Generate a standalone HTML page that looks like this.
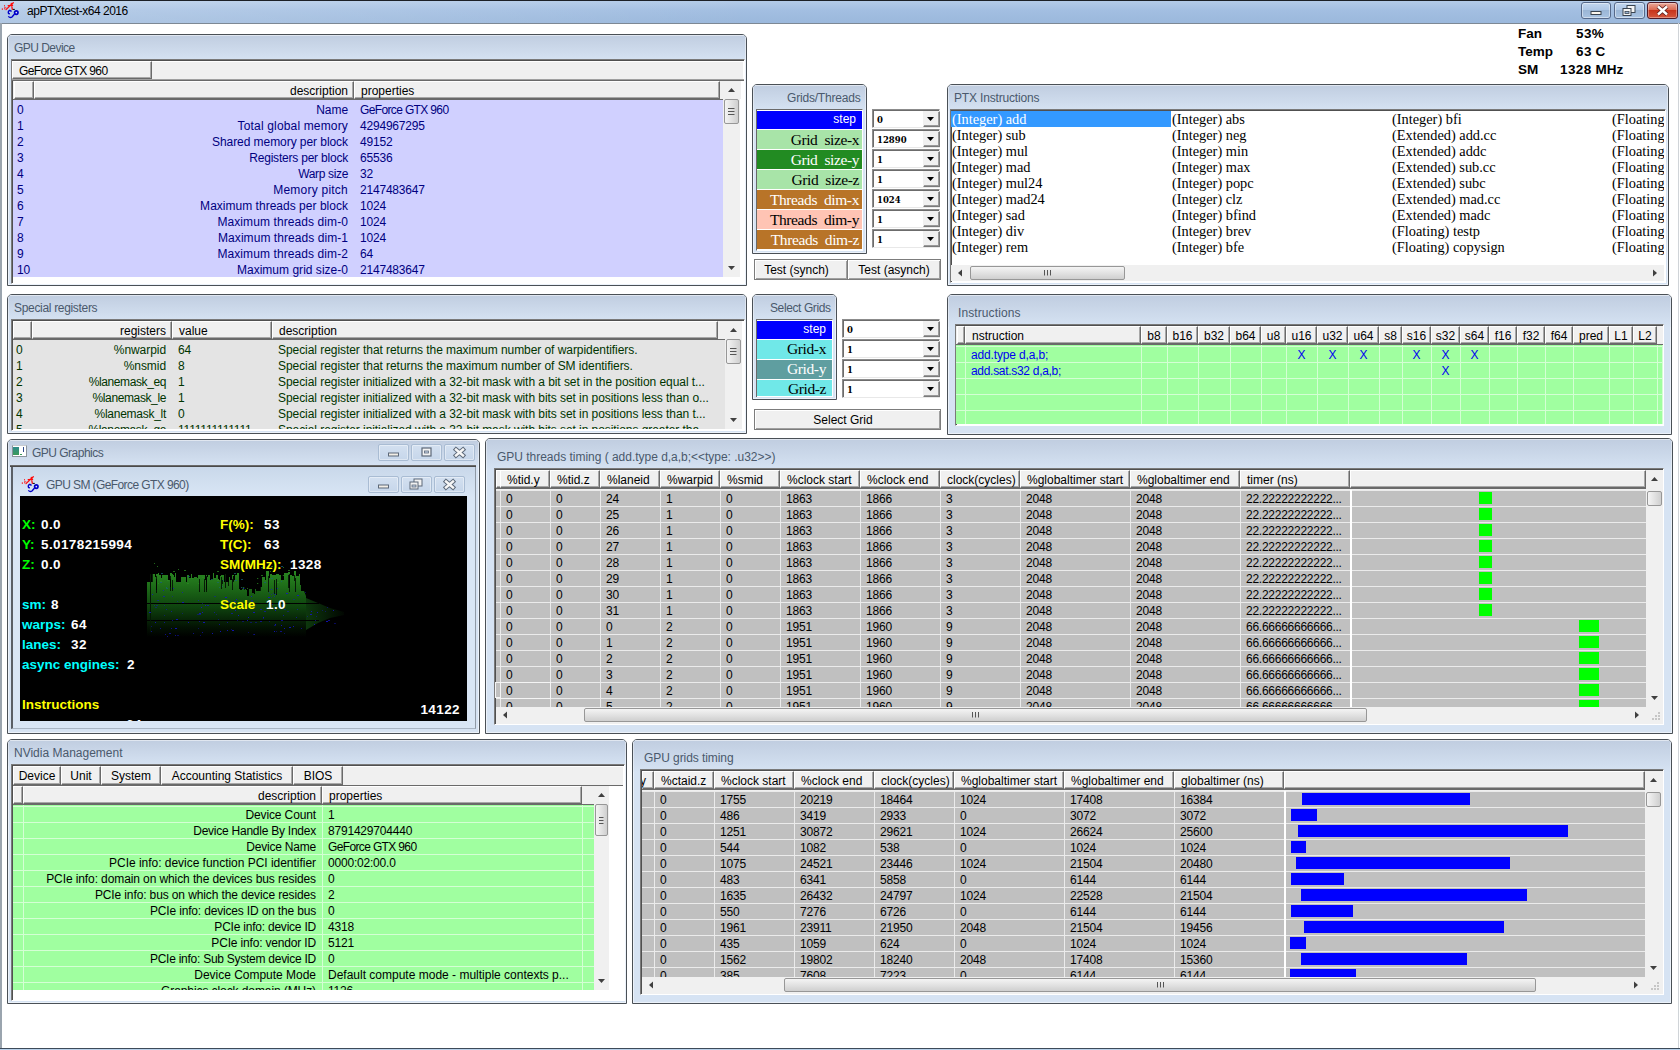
<!DOCTYPE html>
<html><head><meta charset="utf-8"><title>apPTXtest-x64 2016</title><style>
*{box-sizing:border-box}
html,body{margin:0;padding:0}
body{width:1680px;height:1050px;overflow:hidden;background:#fff;font-family:"Liberation Sans",sans-serif;font-size:12px;color:#000;position:relative}
div{position:absolute}
.t{white-space:nowrap;line-height:16px;height:16px}
.r{text-align:right}
.n{letter-spacing:-.2px}
.panel{border:1px solid #4a5056;border-radius:5px 5px 0 0;background:#d6e3f3;overflow:hidden;box-shadow:inset 0 0 0 1px rgba(255,255,255,.55)}
.hd{left:0;top:0;right:0;height:26px;background:linear-gradient(#c0cde0,#d6e3f3);box-shadow:inset 0 1px 0 rgba(255,255,255,.5),inset 1px 0 0 rgba(255,255,255,.4),inset -1px 0 0 rgba(255,255,255,.4)}
.ttl{color:#4a596c;white-space:nowrap;line-height:16px;letter-spacing:-.3px}
.sunk{border:1px solid;border-color:#7a7a7a #fff #fff #7a7a7a;box-shadow:inset 1px 1px 0 #505050}
.hc{background:#f0f0f0;border:1px solid;border-color:#fff #6a6a6a #6a6a6a #fff;box-shadow:inset -1px -1px 0 #a8a8a8;white-space:nowrap;line-height:15px;overflow:hidden;padding:2px 0 0 6px}
.hc.r{padding:2px 5px 0 0}
.hc.c{padding:2px 0 0 0;text-align:center}
.sb{background:#f0f0f0}
.th{border:1px solid #979797;border-radius:2px;background:linear-gradient(90deg,#f4f4f4,#e2e2e2 50%,#cfcfcf)}
.thh{border:1px solid #979797;border-radius:2px;background:linear-gradient(#f4f4f4,#e2e2e2 50%,#cfcfcf)}
.pb{background:#f0f0f0;border:1px solid #7c7c7c;box-shadow:inset 1px 1px 0 #fff,inset -1px -1px 0 #a0a0a0;text-align:center;line-height:20px;white-space:nowrap}
.btn{background:#f0f0f0;border:1px solid;border-color:#fff #6a6a6a #6a6a6a #fff;box-shadow:inset -1px -1px 0 #a8a8a8;text-align:center;line-height:17px;white-space:nowrap}
.cb{background:#fff;border:1px solid;border-color:#8c8c8c #e8e8e8 #e8e8e8 #8c8c8c;box-shadow:inset 1px 1px 0 #6c6c6c;font-family:"DejaVu Serif",serif;font-weight:bold;font-size:8.5px;line-height:21px;padding-left:4px;overflow:hidden}
.cbb{background:#f0f0f0;border:1px solid;border-color:#f0f0f0 #7a7a7a #7a7a7a #f0f0f0;box-shadow:inset -1px -1px 0 #9a9a9a}
.lab{font-family:"Liberation Serif",serif;font-size:15.5px;letter-spacing:-.4px;line-height:19px;text-align:right;white-space:pre;padding-right:3px;overflow:hidden}
.stp{font-family:"Liberation Sans",sans-serif;font-size:12px;letter-spacing:0;line-height:17px;padding-right:6px}
.sys{font-weight:bold;font-size:13.5px;white-space:nowrap;line-height:16px}
.sys i{font-style:normal;letter-spacing:.4px}
</style></head><body>
<div style="left:0px;top:0px;width:1680px;height:24px;background:linear-gradient(90deg,rgba(255,255,255,.22),rgba(255,255,255,0) 45%),linear-gradient(#b3cbe8,#a2bee1 45%,#9bb8dc);border-top:1px solid #1c2026;border-bottom:1px solid #7d8894"></div>
<div style="left:0px;top:23px;width:2px;height:1027px;background:#9aa4ae"></div>
<div style="left:1678px;top:23px;width:1px;height:1027px;background:#d0d4d8"></div>
<div style="left:0px;top:1048px;width:1680px;height:1px;background:#3d4a59"></div>
<div style="left:0px;top:1049px;width:1680px;height:1px;background:#b9d1ea"></div>
<svg style="position:absolute;left:0px;top:0px;" width="22" height="22" viewBox="0 0 22 22"><g fill="#ff1010"><rect x="1.8" y="8.4" width="1.1" height="1.4"/><rect x="4" y="5.2" width="1" height="1.1"/><rect x="4.3" y="6.8" width="1" height="1"/><rect x="5.3" y="7.4" width="1" height="1"/><rect x="4" y="8.3" width="1" height="1"/></g><path d="M6 9.6L13.3 2.7M11.3 3.4L12.3 9.3M8.2 5.7L12.6 5.4" stroke="#ff0808" stroke-width="1.25" fill="none" stroke-linecap="round"/><path d="M12.8 9.4H14.8" stroke="#000" stroke-width="1"/><path d="M11.6 11.4L9.7 10.3C8 11 8 12.6 8.7 13.7L9.9 13.8M8.3 16.4C9.5 17.7 11 17.8 12 17L14.6 14" stroke="#0000c8" stroke-width="1.4" fill="none"/><circle cx="16.3" cy="12.6" r="1.7" stroke="#0000c8" stroke-width="1.7" fill="#dde4f4"/></svg>
<div class="t" style="left:27px;top:3px;letter-spacing:-0.48px">apPTXtest-x64 2016</div>
<div style="left:1581px;top:2px;width:30px;height:17px;background:linear-gradient(#c3d7ef,#aec7e6 45%,#9bb6d6 50%,#a9c3e2);border:1px solid #56698a;border-radius:3px;box-shadow:inset 0 0 0 1px rgba(255,255,255,.45)"></div>
<svg style="position:absolute;left:1581px;top:2px;" width="30" height="17" viewBox="0 0 30 17"><rect x="10.0" y="9.5" width="10" height="3" fill="#fbf6ee" stroke="#3a4450" stroke-width="1"/></svg>
<div style="left:1614px;top:2px;width:31px;height:17px;background:linear-gradient(#c3d7ef,#aec7e6 45%,#9bb6d6 50%,#a9c3e2);border:1px solid #56698a;border-radius:3px;box-shadow:inset 0 0 0 1px rgba(255,255,255,.45)"></div>
<svg style="position:absolute;left:1614px;top:2px;" width="31" height="17" viewBox="0 0 31 17"><rect x="13.0" y="3.5" width="8" height="7" fill="#f4f4f4" stroke="#3a4450"/><rect x="9.0" y="6.5" width="8" height="7" fill="#f4f4f4" stroke="#3a4450"/><rect x="11.0" y="9.5" width="4" height="2" fill="#9bb6d6" stroke="#3a4450" stroke-width=".8"/></svg>
<div style="left:1647px;top:2px;width:31px;height:17px;background:linear-gradient(#e9a99b,#dc6a52 45%,#c8341c 50%,#d4573d);border:1px solid #4e1a28;border-radius:3px;box-shadow:inset 0 0 0 1px rgba(255,255,255,.35)"></div>
<svg style="position:absolute;left:1647px;top:2px;" width="31" height="17" viewBox="0 0 31 17"><path d="M11.0 4.5L20.0 12.5M20.0 4.5L11.0 12.5" stroke="#5a2020" stroke-width="4.2"/><path d="M11.0 4.5L20.0 12.5M20.0 4.5L11.0 12.5" stroke="#fff" stroke-width="2.4"/></svg>
<div class="t sys" style="left:1518px;top:26px">Fan</div>
<div class="t sys" style="left:1576px;top:26px;white-space:pre"><i>53</i>%</div>
<div class="t sys" style="left:1518px;top:44px">Temp</div>
<div class="t sys" style="left:1576px;top:44px;white-space:pre"><i>63</i> C</div>
<div class="t sys" style="left:1518px;top:62px">SM</div>
<div class="t sys" style="left:1560px;top:62px;white-space:pre"><i>1328</i> MHz</div>
<div class="panel" style="left:7px;top:34px;width:740px;height:252px;"><div class="hd" style="height:26px"></div><div class="ttl" style="left:6px;top:5px;letter-spacing:-0.53px;">GPU Device</div></div>
<div class="panel" style="left:752px;top:84px;width:115px;height:170px;"><div class="hd" style="height:26px"></div><div class="ttl" style="left:34px;top:5px;letter-spacing:-0.19px;">Grids/Threads</div></div>
<div class="panel" style="left:947px;top:84px;width:722px;height:202px;"><div class="hd" style="height:26px"></div><div class="ttl" style="left:6px;top:5px;letter-spacing:-0.17px;">PTX Instructions</div></div>
<div class="panel" style="left:7px;top:294px;width:740px;height:140px;"><div class="hd" style="height:26px"></div><div class="ttl" style="left:6px;top:5px;letter-spacing:-0.32px;">Special registers</div></div>
<div class="panel" style="left:752px;top:294px;width:85px;height:106px;"><div class="hd" style="height:26px"></div><div class="ttl" style="left:17px;top:5px;letter-spacing:-0.4px;">Select Grids</div></div>
<div class="panel" style="left:947px;top:294px;width:725px;height:141px;"><div class="hd" style="height:32px"></div><div class="ttl" style="left:10px;top:10px;letter-spacing:0.1px;">Instructions</div></div>
<div class="panel" style="left:7px;top:439px;width:473px;height:295px;"><div class="hd" style="height:27px"></div><div class="ttl" style="left:6px;top:5px;letter-spacing:-0.3px;"></div></div>
<div class="panel" style="left:485px;top:438px;width:1188px;height:296px;"><div class="hd" style="height:31px"></div><div class="ttl" style="left:11px;top:10px;letter-spacing:-0.02px;">GPU threads timing ( add.type d,a,b;&lt;&lt;type: .u32&gt;&gt;)</div></div>
<div class="panel" style="left:7px;top:739px;width:620px;height:265px;"><div class="hd" style="height:26px"></div><div class="ttl" style="left:6px;top:5px;letter-spacing:0.0px;">NVidia Management</div></div>
<div class="panel" style="left:632px;top:739px;width:1040px;height:265px;"><div class="hd" style="height:32px"></div><div class="ttl" style="left:11px;top:10px;letter-spacing:-0.07px;">GPU grids timing</div></div>
<div class="sunk" style="left:11px;top:59px;width:734px;height:225px;background:#fff"></div>
<div class="btn" style="left:12px;top:61px;width:140px;height:18px;text-align:left;padding-left:6px;line-height:19px;letter-spacing:-0.64px">GeForce GTX 960</div>
<div style="left:152px;top:61px;width:591px;height:18px;background:#f0f0f0;border-top:1px solid #fff"></div>
<div style="left:12px;top:79px;width:732px;height:2px;background:#6a6a6a;border-top:1px solid #a0a0a0"></div>
<div style="left:13px;top:81px;width:728px;height:18px;background:#f0f0f0"></div>
<div class="hc" style="left:14px;top:81px;width:20px;height:18px;"></div>
<div class="hc r" style="left:34px;top:81px;width:320px;height:18px;">description</div>
<div class="hc" style="left:354px;top:81px;width:366px;height:18px;">properties</div>
<div style="left:13px;top:99px;width:710px;height:1px;background:#6a6a6a"></div>
<div style="left:13px;top:100px;width:710px;height:177px;background:#d0d0ff"></div>
<div class="t n" style="left:17px;top:102px;color:#000080">0</div>
<div class="t r" style="left:48px;top:102px;color:#000080;width:300px;letter-spacing:-0.07px">Name</div>
<div class="t" style="left:360px;top:102px;color:#000080;letter-spacing:-0.64px">GeForce GTX 960</div>
<div class="t n" style="left:17px;top:118px;color:#000080">1</div>
<div class="t r" style="left:48px;top:118px;color:#000080;width:300px;letter-spacing:0.16px">Total global memory</div>
<div class="t n" style="left:360px;top:118px;color:#000080">4294967295</div>
<div class="t n" style="left:17px;top:134px;color:#000080">2</div>
<div class="t r" style="left:48px;top:134px;color:#000080;width:300px;letter-spacing:-0.06px">Shared memory per block</div>
<div class="t n" style="left:360px;top:134px;color:#000080">49152</div>
<div class="t n" style="left:17px;top:150px;color:#000080">3</div>
<div class="t r" style="left:48px;top:150px;color:#000080;width:300px;letter-spacing:-0.21px">Registers per block</div>
<div class="t n" style="left:360px;top:150px;color:#000080">65536</div>
<div class="t n" style="left:17px;top:166px;color:#000080">4</div>
<div class="t r" style="left:48px;top:166px;color:#000080;width:300px;letter-spacing:-0.35px">Warp size</div>
<div class="t n" style="left:360px;top:166px;color:#000080">32</div>
<div class="t n" style="left:17px;top:182px;color:#000080">5</div>
<div class="t r" style="left:48px;top:182px;color:#000080;width:300px;letter-spacing:0.23px">Memory pitch</div>
<div class="t n" style="left:360px;top:182px;color:#000080">2147483647</div>
<div class="t n" style="left:17px;top:198px;color:#000080">6</div>
<div class="t r" style="left:48px;top:198px;color:#000080;width:300px;letter-spacing:0.02px">Maximum threads per block</div>
<div class="t n" style="left:360px;top:198px;color:#000080">1024</div>
<div class="t n" style="left:17px;top:214px;color:#000080">7</div>
<div class="t r" style="left:48px;top:214px;color:#000080;width:300px;letter-spacing:0.09px">Maximum threads dim-0</div>
<div class="t n" style="left:360px;top:214px;color:#000080">1024</div>
<div class="t n" style="left:17px;top:230px;color:#000080">8</div>
<div class="t r" style="left:48px;top:230px;color:#000080;width:300px;letter-spacing:0.06px">Maximum threads dim-1</div>
<div class="t n" style="left:360px;top:230px;color:#000080">1024</div>
<div class="t n" style="left:17px;top:246px;color:#000080">9</div>
<div class="t r" style="left:48px;top:246px;color:#000080;width:300px;letter-spacing:0.09px">Maximum threads dim-2</div>
<div class="t n" style="left:360px;top:246px;color:#000080">64</div>
<div class="t n" style="left:17px;top:262px;color:#000080">10</div>
<div class="t r" style="left:48px;top:262px;color:#000080;width:300px;letter-spacing:0.02px">Maximum grid size-0</div>
<div class="t n" style="left:360px;top:262px;color:#000080">2147483647</div>
<div class="sb" style="left:723px;top:81px;width:17px;height:196px;"></div>
<svg style="position:absolute;left:723px;top:81px;" width="17" height="196" viewBox="0 0 17 196"><polygon points="5.0,11 12.0,11 8.5,7" fill="#404040"/><polygon points="5.0,185 12.0,185 8.5,189" fill="#404040"/></svg>
<div class="th" style="left:724px;top:99px;width:15px;height:25px;"></div>
<div style="left:728px;top:108px;width:7px;height:1px;background:#555;border-right:1px solid #999"></div>
<div style="left:728px;top:111px;width:7px;height:1px;background:#555;border-right:1px solid #999"></div>
<div style="left:728px;top:114px;width:7px;height:1px;background:#555;border-right:1px solid #999"></div>
<div style="left:756px;top:109px;width:107px;height:142px;background:#fff;border:1px solid #6a6a6a;border-right-color:#fff;border-bottom-color:#fff"></div>
<div class="lab stp" style="left:757px;top:111px;width:105px;height:18px;background:#0000ff;color:#fff;">step</div>
<div class="cb" style="left:872px;top:109px;width:68px;height:19px;">0</div>
<div class="cbb" style="left:923px;top:111px;width:17px;height:16px;"></div>
<svg style="position:absolute;left:923px;top:111px;" width="16" height="16" viewBox="0 0 16 16"><polygon points="4.0,6 11.0,6 7.5,10" fill="#000"/></svg>
<div class="lab" style="left:757px;top:130px;width:105px;height:19px;background:#a8e4a8;color:#000;">Grid  size-x</div>
<div class="cb" style="left:872px;top:129px;width:68px;height:19px;">12890</div>
<div class="cbb" style="left:923px;top:131px;width:17px;height:16px;"></div>
<svg style="position:absolute;left:923px;top:131px;" width="16" height="16" viewBox="0 0 16 16"><polygon points="4.0,6 11.0,6 7.5,10" fill="#000"/></svg>
<div class="lab" style="left:757px;top:150px;width:105px;height:19px;background:#228b22;color:#fff;">Grid  size-y</div>
<div class="cb" style="left:872px;top:149px;width:68px;height:19px;">1</div>
<div class="cbb" style="left:923px;top:151px;width:17px;height:16px;"></div>
<svg style="position:absolute;left:923px;top:151px;" width="16" height="16" viewBox="0 0 16 16"><polygon points="4.0,6 11.0,6 7.5,10" fill="#000"/></svg>
<div class="lab" style="left:757px;top:170px;width:105px;height:19px;background:#a8e4a8;color:#000;">Grid  size-z</div>
<div class="cb" style="left:872px;top:169px;width:68px;height:19px;">1</div>
<div class="cbb" style="left:923px;top:171px;width:17px;height:16px;"></div>
<svg style="position:absolute;left:923px;top:171px;" width="16" height="16" viewBox="0 0 16 16"><polygon points="4.0,6 11.0,6 7.5,10" fill="#000"/></svg>
<div class="lab" style="left:757px;top:190px;width:105px;height:19px;background:#b87428;color:#fff;">Threads  dim-x</div>
<div class="cb" style="left:872px;top:189px;width:68px;height:19px;">1024</div>
<div class="cbb" style="left:923px;top:191px;width:17px;height:16px;"></div>
<svg style="position:absolute;left:923px;top:191px;" width="16" height="16" viewBox="0 0 16 16"><polygon points="4.0,6 11.0,6 7.5,10" fill="#000"/></svg>
<div class="lab" style="left:757px;top:210px;width:105px;height:19px;background:#ffc4b4;color:#000;">Threads  dim-y</div>
<div class="cb" style="left:872px;top:209px;width:68px;height:19px;">1</div>
<div class="cbb" style="left:923px;top:211px;width:17px;height:16px;"></div>
<svg style="position:absolute;left:923px;top:211px;" width="16" height="16" viewBox="0 0 16 16"><polygon points="4.0,6 11.0,6 7.5,10" fill="#000"/></svg>
<div class="lab" style="left:757px;top:230px;width:105px;height:19px;background:#b87428;color:#fff;">Threads  dim-z</div>
<div class="cb" style="left:872px;top:229px;width:68px;height:19px;">1</div>
<div class="cbb" style="left:923px;top:231px;width:17px;height:16px;"></div>
<svg style="position:absolute;left:923px;top:231px;" width="16" height="16" viewBox="0 0 16 16"><polygon points="4.0,6 11.0,6 7.5,10" fill="#000"/></svg>
<div class="pb" style="left:754px;top:259px;width:94px;height:21px;padding-right:9px">Test (synch)</div>
<div class="pb" style="left:847px;top:259px;width:94px;height:21px;">Test (asynch)</div>
<div class="sunk" style="left:950px;top:109px;width:716px;height:174px;background:#fff"></div>
<div style="left:951px;top:111px;width:220px;height:16px;background:#3399ff"></div>
<div style="left:951px;top:111px;width:713px;height:154px;overflow:hidden;font-family:'Liberation Serif',serif;font-size:14.35px">
<div class="t" style="left:1px;top:0px;color:#fff">(Integer) add</div>
<div class="t" style="left:1px;top:16px;color:#000">(Integer) sub</div>
<div class="t" style="left:1px;top:32px;color:#000">(Integer) mul</div>
<div class="t" style="left:1px;top:48px;color:#000">(Integer) mad</div>
<div class="t" style="left:1px;top:64px;color:#000">(Integer) mul24</div>
<div class="t" style="left:1px;top:80px;color:#000">(Integer) mad24</div>
<div class="t" style="left:1px;top:96px;color:#000">(Integer) sad</div>
<div class="t" style="left:1px;top:112px;color:#000">(Integer) div</div>
<div class="t" style="left:1px;top:128px;color:#000">(Integer) rem</div>
<div class="t" style="left:221px;top:0px;color:#000">(Integer) abs</div>
<div class="t" style="left:221px;top:16px;color:#000">(Integer) neg</div>
<div class="t" style="left:221px;top:32px;color:#000">(Integer) min</div>
<div class="t" style="left:221px;top:48px;color:#000">(Integer) max</div>
<div class="t" style="left:221px;top:64px;color:#000">(Integer) popc</div>
<div class="t" style="left:221px;top:80px;color:#000">(Integer) clz</div>
<div class="t" style="left:221px;top:96px;color:#000">(Integer) bfind</div>
<div class="t" style="left:221px;top:112px;color:#000">(Integer) brev</div>
<div class="t" style="left:221px;top:128px;color:#000">(Integer) bfe</div>
<div class="t" style="left:441px;top:0px;color:#000">(Integer) bfi</div>
<div class="t" style="left:441px;top:16px;color:#000">(Extended) add.cc</div>
<div class="t" style="left:441px;top:32px;color:#000">(Extended) addc</div>
<div class="t" style="left:441px;top:48px;color:#000">(Extended) sub.cc</div>
<div class="t" style="left:441px;top:64px;color:#000">(Extended) subc</div>
<div class="t" style="left:441px;top:80px;color:#000">(Extended) mad.cc</div>
<div class="t" style="left:441px;top:96px;color:#000">(Extended) madc</div>
<div class="t" style="left:441px;top:112px;color:#000">(Floating) testp</div>
<div class="t" style="left:441px;top:128px;color:#000">(Floating) copysign</div>
<div class="t" style="left:661px;top:0px;color:#000">(Floating)</div>
<div class="t" style="left:661px;top:16px;color:#000">(Floating)</div>
<div class="t" style="left:661px;top:32px;color:#000">(Floating)</div>
<div class="t" style="left:661px;top:48px;color:#000">(Floating)</div>
<div class="t" style="left:661px;top:64px;color:#000">(Floating)</div>
<div class="t" style="left:661px;top:80px;color:#000">(Floating)</div>
<div class="t" style="left:661px;top:96px;color:#000">(Floating)</div>
<div class="t" style="left:661px;top:112px;color:#000">(Floating)</div>
<div class="t" style="left:661px;top:128px;color:#000">(Floating)</div>
</div>
<div class="sb" style="left:951px;top:265px;width:713px;height:16px;"></div>
<svg style="position:absolute;left:951px;top:265px;" width="713" height="16" viewBox="0 0 713 16"><polygon points="11,4.5 11,11.5 7,8.0" fill="#404040"/><polygon points="702,4.5 702,11.5 706,8.0" fill="#404040"/></svg>
<div class="thh" style="left:970px;top:266px;width:155px;height:14px;"></div>
<div style="left:1044px;top:270px;width:1px;height:6px;background:#555;border-bottom:1px solid #999"></div>
<div style="left:1047px;top:270px;width:1px;height:6px;background:#555;border-bottom:1px solid #999"></div>
<div style="left:1050px;top:270px;width:1px;height:6px;background:#555;border-bottom:1px solid #999"></div>
<div class="sunk" style="left:11px;top:319px;width:734px;height:112px;background:#fff"></div>
<div style="left:13px;top:321px;width:729px;height:18px;background:#f0f0f0"></div>
<div class="hc" style="left:13px;top:321px;width:19px;height:18px;"></div>
<div class="hc r" style="left:32px;top:321px;width:140px;height:18px;">registers</div>
<div class="hc" style="left:172px;top:321px;width:100px;height:18px;">value</div>
<div class="hc" style="left:272px;top:321px;width:446px;height:18px;">description</div>
<div style="left:13px;top:339px;width:712px;height:1px;background:#6a6a6a"></div>
<div style="left:13px;top:340px;width:712px;height:89px;overflow:hidden;background:#e4e4e4;color:#003400">
<div class="t" style="left:3px;top:2px">0</div><div class="t r" style="left:0;width:153px;top:2px;letter-spacing:-0.06px">%nwarpid</div><div class="t n" style="left:165px;top:2px">64</div><div class="t" style="left:265px;top:2px;letter-spacing:-.06px">Special register that returns the maximum number of warpidentifiers.</div>
<div class="t" style="left:3px;top:18px">1</div><div class="t r" style="left:0;width:153px;top:18px;letter-spacing:-0.07px">%nsmid</div><div class="t n" style="left:165px;top:18px">8</div><div class="t" style="left:265px;top:18px;letter-spacing:-.06px">Special register that returns the maximum number of SM identifiers.</div>
<div class="t" style="left:3px;top:34px">2</div><div class="t r" style="left:0;width:153px;top:34px;letter-spacing:-0.4px">%lanemask_eq</div><div class="t n" style="left:165px;top:34px">1</div><div class="t" style="left:265px;top:34px;letter-spacing:-.06px">Special register initialized with a 32-bit mask with a bit set in the position equal t...</div>
<div class="t" style="left:3px;top:50px">3</div><div class="t r" style="left:0;width:153px;top:50px;letter-spacing:-0.38px">%lanemask_le</div><div class="t n" style="left:165px;top:50px">1</div><div class="t" style="left:265px;top:50px;letter-spacing:-.06px">Special register initialized with a 32-bit mask with bits set in positions less than o...</div>
<div class="t" style="left:3px;top:66px">4</div><div class="t r" style="left:0;width:153px;top:66px;letter-spacing:-0.27px">%lanemask_lt</div><div class="t n" style="left:165px;top:66px">0</div><div class="t" style="left:265px;top:66px;letter-spacing:-.06px">Special register initialized with a 32-bit mask with bits set in positions less than t...</div>
<div class="t" style="left:3px;top:82px">5</div><div class="t r" style="left:0;width:153px;top:82px;letter-spacing:-0.38px">%lanemask_ge</div><div class="t n" style="left:165px;top:82px">1111111111111...</div><div class="t" style="left:265px;top:82px;letter-spacing:-.06px">Special register initialized with a 32-bit mask with bits set in positions greater tha...</div>
</div>
<div class="sb" style="left:725px;top:321px;width:17px;height:108px;"></div>
<svg style="position:absolute;left:725px;top:321px;" width="17" height="108" viewBox="0 0 17 108"><polygon points="5.0,11 12.0,11 8.5,7" fill="#404040"/><polygon points="5.0,97 12.0,97 8.5,101" fill="#404040"/></svg>
<div class="th" style="left:726px;top:339px;width:15px;height:25px;"></div>
<div style="left:730px;top:348px;width:7px;height:1px;background:#555;border-right:1px solid #999"></div>
<div style="left:730px;top:351px;width:7px;height:1px;background:#555;border-right:1px solid #999"></div>
<div style="left:730px;top:354px;width:7px;height:1px;background:#555;border-right:1px solid #999"></div>
<div style="left:756px;top:319px;width:77px;height:78px;background:#fff;border:1px solid #6a6a6a;border-right-color:#fff;border-bottom:0"></div>
<div class="lab stp" style="left:757px;top:321px;width:75px;height:18px;background:#0000ff;color:#fff;">step</div>
<div class="cb" style="left:842px;top:319px;width:98px;height:19px;">0</div>
<div class="cbb" style="left:923px;top:321px;width:17px;height:16px;"></div>
<svg style="position:absolute;left:923px;top:321px;" width="16" height="16" viewBox="0 0 16 16"><polygon points="4.0,6 11.0,6 7.5,10" fill="#000"/></svg>
<div class="lab" style="left:757px;top:340px;width:75px;height:19px;background:#70e8e8;color:#000;padding-right:6px;line-height:17.5px;">Grid-x</div>
<div class="cb" style="left:842px;top:339px;width:98px;height:19px;">1</div>
<div class="cbb" style="left:923px;top:341px;width:17px;height:16px;"></div>
<svg style="position:absolute;left:923px;top:341px;" width="16" height="16" viewBox="0 0 16 16"><polygon points="4.0,6 11.0,6 7.5,10" fill="#000"/></svg>
<div class="lab" style="left:757px;top:360px;width:75px;height:19px;background:#5f9ea0;color:#fff;padding-right:6px;line-height:17.5px;">Grid-y</div>
<div class="cb" style="left:842px;top:359px;width:98px;height:19px;">1</div>
<div class="cbb" style="left:923px;top:361px;width:17px;height:16px;"></div>
<svg style="position:absolute;left:923px;top:361px;" width="16" height="16" viewBox="0 0 16 16"><polygon points="4.0,6 11.0,6 7.5,10" fill="#000"/></svg>
<div class="lab" style="left:757px;top:380px;width:75px;height:16px;background:#70e8e8;color:#000;padding-right:6px;line-height:17.5px;">Grid-z</div>
<div class="cb" style="left:842px;top:379px;width:98px;height:19px;">1</div>
<div class="cbb" style="left:923px;top:381px;width:17px;height:16px;"></div>
<svg style="position:absolute;left:923px;top:381px;" width="16" height="16" viewBox="0 0 16 16"><polygon points="4.0,6 11.0,6 7.5,10" fill="#000"/></svg>
<div class="pb" style="left:754px;top:409px;width:187px;height:21px;padding-right:9px">Select Grid</div>
<div class="sunk" style="left:955px;top:324px;width:709px;height:102px;background:#fff"></div>
<div style="left:956px;top:326px;width:707px;height:18px;background:#f0f0f0"></div>
<div class="hc" style="left:957px;top:326px;width:8px;height:18px;"></div>
<div class="hc" style="left:965px;top:326px;width:176px;height:18px;">nstruction</div>
<div class="hc c" style="left:1141px;top:326px;width:26px;height:18px;">b8</div>
<div class="hc c" style="left:1167px;top:326px;width:31px;height:18px;">b16</div>
<div class="hc c" style="left:1198px;top:326px;width:32px;height:18px;">b32</div>
<div class="hc c" style="left:1230px;top:326px;width:31px;height:18px;">b64</div>
<div class="hc c" style="left:1261px;top:326px;width:25px;height:18px;">u8</div>
<div class="hc c" style="left:1286px;top:326px;width:31px;height:18px;">u16</div>
<div class="hc c" style="left:1317px;top:326px;width:31px;height:18px;">u32</div>
<div class="hc c" style="left:1348px;top:326px;width:31px;height:18px;">u64</div>
<div class="hc c" style="left:1379px;top:326px;width:23px;height:18px;">s8</div>
<div class="hc c" style="left:1402px;top:326px;width:29px;height:18px;">s16</div>
<div class="hc c" style="left:1431px;top:326px;width:29px;height:18px;">s32</div>
<div class="hc c" style="left:1460px;top:326px;width:29px;height:18px;">s64</div>
<div class="hc c" style="left:1489px;top:326px;width:28px;height:18px;">f16</div>
<div class="hc c" style="left:1517px;top:326px;width:28px;height:18px;">f32</div>
<div class="hc c" style="left:1545px;top:326px;width:28px;height:18px;">f64</div>
<div class="hc c" style="left:1573px;top:326px;width:36px;height:18px;">pred</div>
<div class="hc c" style="left:1609px;top:326px;width:24px;height:18px;">L1</div>
<div class="hc c" style="left:1633px;top:326px;width:24px;height:18px;">L2</div>
<div style="left:956px;top:344px;width:707px;height:1px;background:#6a6a6a"></div>
<div style="left:956px;top:345px;width:707px;height:79px;background:#a0ffa0"></div>
<div style="left:956px;top:346px;width:707px;height:1px;background:#d4ffd4"></div>
<div style="left:956px;top:362px;width:707px;height:1px;background:#d4ffd4"></div>
<div style="left:956px;top:378px;width:707px;height:1px;background:#d4ffd4"></div>
<div style="left:956px;top:394px;width:707px;height:1px;background:#d4ffd4"></div>
<div style="left:956px;top:410px;width:707px;height:1px;background:#d4ffd4"></div>
<div style="left:965px;top:345px;width:1px;height:79px;background:#d4ffd4"></div>
<div style="left:1141px;top:345px;width:1px;height:79px;background:#d4ffd4"></div>
<div style="left:1167px;top:345px;width:1px;height:79px;background:#d4ffd4"></div>
<div style="left:1198px;top:345px;width:1px;height:79px;background:#d4ffd4"></div>
<div style="left:1230px;top:345px;width:1px;height:79px;background:#d4ffd4"></div>
<div style="left:1261px;top:345px;width:1px;height:79px;background:#d4ffd4"></div>
<div style="left:1286px;top:345px;width:1px;height:79px;background:#d4ffd4"></div>
<div style="left:1317px;top:345px;width:1px;height:79px;background:#d4ffd4"></div>
<div style="left:1348px;top:345px;width:1px;height:79px;background:#d4ffd4"></div>
<div style="left:1379px;top:345px;width:1px;height:79px;background:#d4ffd4"></div>
<div style="left:1402px;top:345px;width:1px;height:79px;background:#d4ffd4"></div>
<div style="left:1431px;top:345px;width:1px;height:79px;background:#d4ffd4"></div>
<div style="left:1460px;top:345px;width:1px;height:79px;background:#d4ffd4"></div>
<div style="left:1489px;top:345px;width:1px;height:79px;background:#d4ffd4"></div>
<div style="left:1517px;top:345px;width:1px;height:79px;background:#d4ffd4"></div>
<div style="left:1545px;top:345px;width:1px;height:79px;background:#d4ffd4"></div>
<div style="left:1573px;top:345px;width:1px;height:79px;background:#d4ffd4"></div>
<div style="left:1609px;top:345px;width:1px;height:79px;background:#d4ffd4"></div>
<div style="left:1633px;top:345px;width:1px;height:79px;background:#d4ffd4"></div>
<div style="left:1657px;top:345px;width:1px;height:79px;background:#d4ffd4"></div>
<div style="left:1662px;top:345px;width:1px;height:79px;background:#d4ffd4"></div>
<div class="t" style="left:971px;top:347px;color:#0000f0;letter-spacing:-.15px">add.type d,a,b;</div>
<div class="t" style="left:971px;top:363px;color:#0000f0;letter-spacing:-.3px">add.sat.s32 d,a,b;</div>
<div class="t" style="left:1286px;top:347px;color:#0000f0;width:31px;text-align:center">X</div>
<div class="t" style="left:1317px;top:347px;color:#0000f0;width:31px;text-align:center">X</div>
<div class="t" style="left:1348px;top:347px;color:#0000f0;width:31px;text-align:center">X</div>
<div class="t" style="left:1402px;top:347px;color:#0000f0;width:29px;text-align:center">X</div>
<div class="t" style="left:1431px;top:347px;color:#0000f0;width:29px;text-align:center">X</div>
<div class="t" style="left:1460px;top:347px;color:#0000f0;width:29px;text-align:center">X</div>
<div class="t" style="left:1431px;top:363px;color:#0000f0;width:29px;text-align:center">X</div>
<div style="left:12px;top:445px;width:15px;height:12px;background:#fff;border:1px solid #8a939c;border-top-color:#c8ccd0"></div>
<div style="left:13px;top:447px;width:6px;height:8px;background:linear-gradient(#2e8b8b,#3a9a5a)"></div>
<div style="left:20px;top:454px;width:2px;height:1px;background:#3a9a5a"></div>
<div style="left:23px;top:447px;width:1px;height:5px;background:#2e4a8b"></div>
<div class="t ttl" style="left:32px;top:445px;letter-spacing:-0.51px">GPU Graphics</div>
<div style="left:378px;top:444px;width:31px;height:17px;background:linear-gradient(#d3e0f0,#c6d6ea);border:1px solid #a9bcd3;border-radius:2px;box-shadow:inset 0 0 0 1px rgba(255,255,255,.4)"></div>
<svg style="position:absolute;left:378px;top:444px;" width="31" height="17" viewBox="0 0 31 17"><rect x="10.5" y="9.0" width="10" height="3" fill="#f2eee6" stroke="#5c6878"/></svg>
<div style="left:411px;top:444px;width:31px;height:17px;background:linear-gradient(#d3e0f0,#c6d6ea);border:1px solid #a9bcd3;border-radius:2px;box-shadow:inset 0 0 0 1px rgba(255,255,255,.4)"></div>
<svg style="position:absolute;left:411px;top:444px;" width="31" height="17" viewBox="0 0 31 17"><rect x="11.0" y="4.0" width="9" height="8" fill="#f2f2f2" stroke="#5c6878" stroke-width="1.2"/><rect x="13.5" y="7.0" width="4" height="2" fill="#c6d6ea" stroke="#5c6878" stroke-width=".8"/></svg>
<div style="left:444px;top:444px;width:31px;height:17px;background:linear-gradient(#d3e0f0,#c6d6ea);border:1px solid #a9bcd3;border-radius:2px;box-shadow:inset 0 0 0 1px rgba(255,255,255,.4)"></div>
<svg style="position:absolute;left:444px;top:444px;" width="31" height="17" viewBox="0 0 31 17"><path d="M12.0 5.5L19.0 11.5M19.0 5.5L12.0 11.5" stroke="#5c6878" stroke-width="4.4" stroke-linecap="square"/><path d="M12.0 5.5L19.0 11.5M19.0 5.5L12.0 11.5" stroke="#f6f6f6" stroke-width="2.4" stroke-linecap="square"/></svg>
<div style="left:10px;top:465px;width:466px;height:2px;background:#6a6a6a;border-bottom:1px solid #4a4a4a"></div>
<div style="left:11px;top:467px;width:465px;height:262px;background:linear-gradient(#c9d8ea,#d9e6f5 30px,#d9e6f5);border-left:2px solid #5a5f66;border-right:1px solid #8f99a5;border-bottom:1px solid #aab6c4"></div>
<svg style="position:absolute;left:20px;top:474px;" width="22" height="22" viewBox="0 0 22 22"><g fill="#ff1010"><rect x="1.8" y="8.4" width="1.1" height="1.4"/><rect x="4" y="5.2" width="1" height="1.1"/><rect x="4.3" y="6.8" width="1" height="1"/><rect x="5.3" y="7.4" width="1" height="1"/><rect x="4" y="8.3" width="1" height="1"/></g><path d="M6 9.6L13.3 2.7M11.3 3.4L12.3 9.3M8.2 5.7L12.6 5.4" stroke="#ff0808" stroke-width="1.25" fill="none" stroke-linecap="round"/><path d="M12.8 9.4H14.8" stroke="#000" stroke-width="1"/><path d="M11.6 11.4L9.7 10.3C8 11 8 12.6 8.7 13.7L9.9 13.8M8.3 16.4C9.5 17.7 11 17.8 12 17L14.6 14" stroke="#0000c8" stroke-width="1.4" fill="none"/><circle cx="16.3" cy="12.6" r="1.7" stroke="#0000c8" stroke-width="1.7" fill="#dde4f4"/></svg>
<div class="t ttl" style="left:46px;top:477px;letter-spacing:-0.59px">GPU SM (GeForce GTX 960)</div>
<div style="left:368px;top:476px;width:31px;height:17px;background:linear-gradient(#d3e0f0,#c6d6ea);border:1px solid #a9bcd3;border-radius:2px;box-shadow:inset 0 0 0 1px rgba(255,255,255,.4)"></div>
<svg style="position:absolute;left:368px;top:476px;" width="31" height="17" viewBox="0 0 31 17"><rect x="10.5" y="9.0" width="10" height="3" fill="#f2eee6" stroke="#5c6878"/></svg>
<div style="left:401px;top:476px;width:31px;height:17px;background:linear-gradient(#d3e0f0,#c6d6ea);border:1px solid #a9bcd3;border-radius:2px;box-shadow:inset 0 0 0 1px rgba(255,255,255,.4)"></div>
<svg style="position:absolute;left:401px;top:476px;" width="31" height="17" viewBox="0 0 31 17"><rect x="13.0" y="3.0" width="8" height="7" fill="#f2f2f2" stroke="#5c6878"/><rect x="9.0" y="6.0" width="8" height="7" fill="#f2f2f2" stroke="#5c6878"/><rect x="11.0" y="9.0" width="4" height="2" fill="#c6d6ea" stroke="#5c6878" stroke-width=".8"/></svg>
<div style="left:434px;top:476px;width:31px;height:17px;background:linear-gradient(#d3e0f0,#c6d6ea);border:1px solid #a9bcd3;border-radius:2px;box-shadow:inset 0 0 0 1px rgba(255,255,255,.4)"></div>
<svg style="position:absolute;left:434px;top:476px;" width="31" height="17" viewBox="0 0 31 17"><path d="M12.0 5.5L19.0 11.5M19.0 5.5L12.0 11.5" stroke="#5c6878" stroke-width="4.4" stroke-linecap="square"/><path d="M12.0 5.5L19.0 11.5M19.0 5.5L12.0 11.5" stroke="#f6f6f6" stroke-width="2.4" stroke-linecap="square"/></svg>
<div style="left:20px;top:496px;width:447px;height:225px;background:#000;overflow:hidden"></div>
<svg style="position:absolute;left:20px;top:496px" width="447" height="225" viewBox="0 0 447 225"><defs><linearGradient id="hg" x1="0" y1="0" x2="0" y2="1"><stop offset="0" stop-color="#2a8822"/><stop offset=".25" stop-color="#1d6a18"/><stop offset=".55" stop-color="#0e420e"/><stop offset=".85" stop-color="#031203"/><stop offset="1" stop-color="#000"/></linearGradient><linearGradient id="tg" x1="0" y1="0" x2="1" y2="0"><stop offset="0" stop-color="#135013"/><stop offset="1" stop-color="#020a02"/></linearGradient></defs><polygon points="286,102 298,107 310,112 324,116 324,119 310,122 298,127 286,134" fill="url(#tg)" opacity=".7"/><polygon points="127,141 127,86 130,86 130,86 132,86 132,78 135,78 135,81 136,81 136,78 138,78 138,77 139,77 139,79 141,79 141,82 142,82 142,79 145,79 145,79 148,79 148,84 150,84 150,77 151,77 151,77 152,77 152,78 153,78 153,79 154,79 154,81 155,81 155,77 156,77 156,86 158,86 158,86 161,86 161,81 164,81 164,81 166,81 166,86 167,86 167,79 169,79 169,82 171,82 171,78 172,78 172,82 174,82 174,81 177,81 177,82 178,82 178,79 181,79 181,79 183,79 183,79 185,79 185,84 186,84 186,79 187,79 187,81 188,81 188,79 190,79 190,84 192,84 192,84 193,84 193,77 194,77 194,82 196,82 196,79 198,79 198,83 199,83 199,84 200,84 200,80 201,80 201,79 202,79 202,79 204,79 204,86 205,86 205,78 206,78 206,86 209,86 209,81 210,81 210,84 212,84 212,79 214,79 214,84 215,84 215,79 217,79 217,77 219,77 219,93 220,93 220,94 222,94 222,91 225,91 225,93 226,93 226,94 227,94 227,100 229,100 229,93 232,93 232,97 234,97 234,98 235,98 235,93 236,93 236,95 239,95 239,95 240,95 240,91 242,91 242,81 245,81 245,84 246,84 246,75 248,75 248,75 249,75 249,82 250,82 250,78 252,78 252,79 255,79 255,79 256,79 256,78 259,78 259,79 261,79 261,84 264,84 264,77 266,77 266,77 267,77 267,77 268,77 268,76 270,76 270,79 272,79 272,80 274,80 274,75 276,75 276,80 279,80 279,78 280,78 280,89 281,89 281,95 284,95 286,100 286,141" fill="url(#hg)"/><rect x="222" y="78" width="10" height="9" fill="#000" opacity=".8"/><rect x="127" y="107" width="172" height="1" fill="#000"/><rect x="127" y="124" width="172" height="1" fill="#000"/><rect x="130" y="78" width="1" height="58" fill="#041804"/><rect x="285" y="96" width="1" height="1" fill="#1414c8" opacity="0.45"/><rect x="180" y="139" width="1" height="1" fill="#1414c8" opacity="0.45"/><rect x="196" y="118" width="1" height="1" fill="#1414c8" opacity="0.45"/><rect x="143" y="94" width="1" height="1" fill="#1414c8" opacity="0.65"/><rect x="222" y="125" width="2" height="1" fill="#1414c8" opacity="0.45"/><rect x="151" y="115" width="1" height="1" fill="#1414c8" opacity="0.65"/><rect x="212" y="134" width="2" height="1" fill="#1414c8" opacity="0.85"/><rect x="261" y="129" width="1" height="1" fill="#1414c8" opacity="0.85"/><rect x="136" y="93" width="1" height="1" fill="#1414c8" opacity="0.65"/><rect x="307" y="111" width="1" height="1" fill="#1414c8" opacity="0.45"/><rect x="281" y="132" width="1" height="1" fill="#1414c8" opacity="0.65"/><rect x="145" y="138" width="1" height="1" fill="#1414c8" opacity="0.65"/><rect x="162" y="96" width="1" height="1" fill="#1414c8" opacity="0.65"/><rect x="267" y="115" width="2" height="1" fill="#1414c8" opacity="0.45"/><rect x="215" y="114" width="1" height="1" fill="#1414c8" opacity="0.85"/><rect x="249" y="96" width="1" height="1" fill="#1414c8" opacity="0.45"/><rect x="255" y="128" width="1" height="1" fill="#1414c8" opacity="0.85"/><rect x="297" y="116" width="1" height="1" fill="#1414c8" opacity="0.85"/><rect x="131" y="130" width="1" height="1" fill="#1414c8" opacity="0.45"/><rect x="151" y="132" width="1" height="1" fill="#1414c8" opacity="0.65"/><rect x="234" y="138" width="1" height="1" fill="#1414c8" opacity="0.65"/><rect x="276" y="121" width="1" height="1" fill="#1414c8" opacity="0.65"/><rect x="266" y="97" width="2" height="1" fill="#1414c8" opacity="0.85"/><rect x="135" y="111" width="2" height="1" fill="#1414c8" opacity="0.45"/><rect x="251" y="93" width="1" height="1" fill="#1414c8" opacity="0.85"/><rect x="156" y="123" width="2" height="1" fill="#1414c8" opacity="0.85"/><rect x="252" y="108" width="1" height="1" fill="#1414c8" opacity="0.65"/><rect x="205" y="101" width="2" height="1" fill="#1414c8" opacity="0.85"/><rect x="179" y="125" width="1" height="1" fill="#1414c8" opacity="0.65"/><rect x="296" y="120" width="1" height="1" fill="#1414c8" opacity="0.45"/><rect x="211" y="117" width="2" height="1" fill="#1414c8" opacity="0.65"/><rect x="178" y="132" width="1" height="1" fill="#1414c8" opacity="0.45"/><rect x="182" y="116" width="1" height="1" fill="#1414c8" opacity="0.85"/><rect x="209" y="105" width="1" height="1" fill="#1414c8" opacity="0.45"/><rect x="255" y="114" width="1" height="1" fill="#1414c8" opacity="0.85"/><rect x="144" y="109" width="1" height="1" fill="#1414c8" opacity="0.45"/><rect x="243" y="122" width="1" height="1" fill="#1414c8" opacity="0.45"/><rect x="233" y="116" width="2" height="1" fill="#1414c8" opacity="0.85"/><rect x="254" y="135" width="1" height="1" fill="#1414c8" opacity="0.85"/><rect x="287" y="120" width="1" height="1" fill="#1414c8" opacity="0.45"/><rect x="136" y="109" width="2" height="1" fill="#1414c8" opacity="0.45"/><rect x="199" y="128" width="1" height="1" fill="#1414c8" opacity="0.65"/><rect x="294" y="128" width="1" height="1" fill="#1414c8" opacity="0.85"/><rect x="162" y="117" width="1" height="1" fill="#1414c8" opacity="0.45"/><rect x="134" y="109" width="1" height="1" fill="#1414c8" opacity="0.45"/><rect x="140" y="132" width="1" height="1" fill="#1414c8" opacity="0.65"/><rect x="155" y="132" width="2" height="1" fill="#1414c8" opacity="0.85"/><rect x="291" y="115" width="1" height="1" fill="#1414c8" opacity="0.85"/><rect x="178" y="104" width="1" height="1" fill="#1414c8" opacity="0.65"/><rect x="173" y="137" width="1" height="1" fill="#1414c8" opacity="0.65"/><rect x="264" y="137" width="1" height="1" fill="#1414c8" opacity="0.45"/><rect x="185" y="109" width="1" height="1" fill="#1414c8" opacity="0.85"/><rect x="306" y="125" width="2" height="1" fill="#1414c8" opacity="0.85"/><rect x="228" y="136" width="1" height="1" fill="#1414c8" opacity="0.45"/><rect x="233" y="138" width="1" height="1" fill="#1414c8" opacity="0.45"/><rect x="243" y="121" width="1" height="1" fill="#1414c8" opacity="0.85"/><rect x="129" y="116" width="2" height="1" fill="#1414c8" opacity="0.85"/><rect x="295" y="124" width="1" height="1" fill="#1414c8" opacity="0.65"/><rect x="211" y="133" width="1" height="1" fill="#1414c8" opacity="0.45"/><rect x="182" y="107" width="1" height="1" fill="#1414c8" opacity="0.45"/><rect x="207" y="126" width="1" height="1" fill="#1414c8" opacity="0.65"/><rect x="217" y="124" width="1" height="1" fill="#1414c8" opacity="0.45"/><rect x="240" y="113" width="2" height="1" fill="#1414c8" opacity="0.65"/><rect x="198" y="123" width="1" height="1" fill="#1414c8" opacity="0.45"/><rect x="144" y="119" width="1" height="1" fill="#1414c8" opacity="0.45"/><rect x="264" y="113" width="2" height="1" fill="#1414c8" opacity="0.45"/><rect x="248" y="101" width="2" height="1" fill="#1414c8" opacity="0.85"/><rect x="260" y="135" width="2" height="1" fill="#1414c8" opacity="0.65"/><rect x="254" y="129" width="2" height="1" fill="#1414c8" opacity="0.45"/><rect x="240" y="125" width="2" height="1" fill="#1414c8" opacity="0.65"/><rect x="314" y="127" width="2" height="1" fill="#1414c8" opacity="0.45"/><rect x="261" y="124" width="2" height="1" fill="#1414c8" opacity="0.65"/><rect x="207" y="134" width="1" height="1" fill="#1414c8" opacity="0.85"/><rect x="181" y="111" width="1" height="1" fill="#1414c8" opacity="0.85"/><rect x="262" y="109" width="2" height="1" fill="#1414c8" opacity="0.65"/><rect x="179" y="118" width="2" height="1" fill="#1414c8" opacity="0.45"/><rect x="256" y="92" width="2" height="1" fill="#1414c8" opacity="0.65"/><rect x="135" y="126" width="1" height="1" fill="#1414c8" opacity="0.85"/><rect x="230" y="126" width="2" height="1" fill="#1414c8" opacity="0.45"/><rect x="253" y="97" width="2" height="1" fill="#1414c8" opacity="0.45"/><rect x="144" y="126" width="1" height="1" fill="#1414c8" opacity="0.65"/><rect x="231" y="109" width="1" height="1" fill="#1414c8" opacity="0.65"/><rect x="254" y="100" width="1" height="1" fill="#1414c8" opacity="0.65"/><rect x="249" y="125" width="1" height="1" fill="#1414c8" opacity="0.45"/><rect x="177" y="118" width="2" height="1" fill="#1414c8" opacity="0.45"/><rect x="194" y="100" width="2" height="1" fill="#1414c8" opacity="0.45"/><rect x="137" y="104" width="1" height="1" fill="#1414c8" opacity="0.45"/><rect x="131" y="135" width="1" height="1" fill="#1414c8" opacity="0.65"/><rect x="313" y="114" width="1" height="1" fill="#1414c8" opacity="0.85"/><rect x="255" y="98" width="1" height="1" fill="#1414c8" opacity="0.85"/><rect x="277" y="99" width="2" height="1" fill="#1414c8" opacity="0.85"/><rect x="192" y="137" width="1" height="1" fill="#1414c8" opacity="0.85"/><rect x="263" y="119" width="1" height="1" fill="#1414c8" opacity="0.65"/><rect x="290" y="118" width="2" height="1" fill="#1414c8" opacity="0.85"/><rect x="168" y="126" width="1" height="1" fill="#1414c8" opacity="0.85"/><rect x="264" y="132" width="1" height="1" fill="#1414c8" opacity="0.85"/><rect x="183" y="126" width="2" height="1" fill="#1414c8" opacity="0.85"/><rect x="162" y="106" width="2" height="1" fill="#1414c8" opacity="0.85"/><rect x="216" y="103" width="1" height="1" fill="#1414c8" opacity="0.85"/><rect x="208" y="104" width="1" height="1" fill="#1414c8" opacity="0.45"/><rect x="152" y="100" width="1" height="1" fill="#1414c8" opacity="0.45"/><rect x="194" y="116" width="1" height="1" fill="#1414c8" opacity="0.65"/><rect x="235" y="126" width="2" height="1" fill="#1414c8" opacity="0.45"/><rect x="179" y="117" width="2" height="1" fill="#1414c8" opacity="0.85"/><rect x="132" y="98" width="1" height="1" fill="#1414c8" opacity="0.85"/><rect x="302" y="114" width="1" height="1" fill="#1414c8" opacity="0.45"/><rect x="308" y="124" width="2" height="1" fill="#1414c8" opacity="0.65"/><rect x="256" y="135" width="1" height="1" fill="#1414c8" opacity="0.45"/><rect x="251" y="98" width="1" height="1" fill="#1414c8" opacity="0.45"/><rect x="269" y="131" width="2" height="1" fill="#1414c8" opacity="0.85"/><rect x="251" y="101" width="1" height="1" fill="#1414c8" opacity="0.45"/><rect x="157" y="105" width="1" height="1" fill="#1414c8" opacity="0.45"/><rect x="200" y="135" width="1" height="1" fill="#1414c8" opacity="0.85"/><rect x="143" y="100" width="2" height="1" fill="#1414c8" opacity="0.65"/><rect x="147" y="140" width="1" height="1" fill="#1414c8" opacity="0.65"/><rect x="228" y="121" width="1" height="1" fill="#1414c8" opacity="0.85"/><rect x="218" y="119" width="1" height="1" fill="#1414c8" opacity="0.85"/><rect x="223" y="92" width="2" height="1" fill="#1414c8" opacity="0.85"/><rect x="138" y="104" width="1" height="1" fill="#1414c8" opacity="0.65"/><rect x="244" y="115" width="2" height="1" fill="#1414c8" opacity="0.65"/><rect x="231" y="104" width="2" height="1" fill="#1414c8" opacity="0.45"/><rect x="152" y="124" width="1" height="1" fill="#1414c8" opacity="0.65"/><rect x="149" y="137" width="2" height="1" fill="#1414c8" opacity="0.65"/><rect x="273" y="130" width="1" height="1" fill="#1414c8" opacity="0.85"/><rect x="277" y="113" width="1" height="1" fill="#1414c8" opacity="0.65"/><rect x="157" y="139" width="2" height="1" fill="#1414c8" opacity="0.45"/><rect x="231" y="100" width="1" height="1" fill="#1414c8" opacity="0.85"/><rect x="305" y="115" width="1" height="1" fill="#1414c8" opacity="0.45"/><rect x="231" y="105" width="2" height="1" fill="#1414c8" opacity="0.45"/><rect x="146" y="113" width="1" height="1" fill="#1414c8" opacity="0.65"/><rect x="153" y="92" width="1" height="1" fill="#1414c8" opacity="0.85"/><rect x="187" y="109" width="2" height="1" fill="#1414c8" opacity="0.65"/><rect x="214" y="105" width="2" height="1" fill="#1414c8" opacity="0.65"/><rect x="273" y="103" width="2" height="1" fill="#1414c8" opacity="0.45"/><rect x="227" y="124" width="1" height="1" fill="#1414c8" opacity="0.85"/><rect x="182" y="136" width="1" height="1" fill="#1414c8" opacity="0.65"/><rect x="275" y="93" width="1" height="1" fill="#1414c8" opacity="0.85"/><rect x="155" y="139" width="1" height="1" fill="#1414c8" opacity="0.65"/><rect x="241" y="79" width="2" height="1" fill="#2a8a22" opacity=".75"/><rect x="178" y="87" width="2" height="1" fill="#2a8a22" opacity=".75"/><rect x="153" y="75" width="2" height="1" fill="#2a8a22" opacity=".75"/><rect x="215" y="84" width="2" height="1" fill="#175c7a" opacity=".75"/><rect x="261" y="85" width="1" height="1" fill="#175c7a" opacity=".75"/><rect x="147" y="84" width="2" height="1" fill="#2a8a22" opacity=".75"/><rect x="226" y="72" width="2" height="1" fill="#175c7a" opacity=".75"/><rect x="171" y="82" width="2" height="1" fill="#2a8a22" opacity=".75"/><rect x="237" y="82" width="2" height="1" fill="#2a8a22" opacity=".75"/><rect x="262" y="79" width="2" height="1" fill="#2a8a22" opacity=".75"/><rect x="221" y="83" width="2" height="1" fill="#175c7a" opacity=".75"/><rect x="197" y="84" width="2" height="1" fill="#2a8a22" opacity=".75"/><rect x="134" y="67" width="1" height="1" fill="#2a8a22" opacity=".75"/><rect x="168" y="80" width="2" height="1" fill="#175c7a" opacity=".75"/><rect x="141" y="77" width="2" height="1" fill="#175c7a" opacity=".75"/><rect x="140" y="85" width="2" height="1" fill="#2a8a22" opacity=".75"/><rect x="146" y="92" width="1" height="1" fill="#175c7a" opacity=".75"/><rect x="250" y="75" width="1" height="1" fill="#2a8a22" opacity=".75"/><rect x="261" y="70" width="2" height="1" fill="#175c7a" opacity=".75"/><rect x="164" y="74" width="2" height="1" fill="#2a8a22" opacity=".75"/><rect x="140" y="86" width="2" height="1" fill="#175c7a" opacity=".75"/><rect x="158" y="73" width="1" height="1" fill="#2a8a22" opacity=".75"/><rect x="263" y="71" width="1" height="1" fill="#2a8a22" opacity=".75"/><rect x="241" y="71" width="2" height="1" fill="#175c7a" opacity=".75"/><rect x="244" y="86" width="2" height="1" fill="#175c7a" opacity=".75"/><rect x="221" y="91" width="2" height="1" fill="#1a6a6a" opacity=".75"/><rect x="202" y="90" width="1" height="1" fill="#1a6a6a" opacity=".75"/><rect x="251" y="70" width="2" height="1" fill="#2a8a22" opacity=".75"/><rect x="257" y="86" width="2" height="1" fill="#2a8a22" opacity=".75"/><rect x="197" y="86" width="2" height="1" fill="#1a6a6a" opacity=".75"/><rect x="199" y="91" width="1" height="1" fill="#1a6a6a" opacity=".75"/><rect x="191" y="83" width="2" height="1" fill="#1a6a6a" opacity=".75"/><rect x="138" y="87" width="1" height="1" fill="#2a8a22" opacity=".75"/><rect x="197" y="75" width="2" height="1" fill="#2a8a22" opacity=".75"/><rect x="137" y="70" width="1" height="1" fill="#2a8a22" opacity=".75"/><rect x="146" y="91" width="1" height="1" fill="#1a6a6a" opacity=".75"/><rect x="268" y="74" width="2" height="1" fill="#2a8a22" opacity=".75"/><rect x="251" y="82" width="2" height="1" fill="#1a6a6a" opacity=".75"/><rect x="214" y="77" width="2" height="1" fill="#1a6a6a" opacity=".75"/><rect x="147" y="92" width="1" height="1" fill="#175c7a" opacity=".75"/><rect x="182" y="81" width="2" height="1" fill="#2a8a22" opacity=".75"/><rect x="227" y="92" width="1" height="1" fill="#2a8a22" opacity=".75"/><rect x="167" y="87" width="2" height="1" fill="#2a8a22" opacity=".75"/><rect x="202" y="84" width="2" height="1" fill="#1a6a6a" opacity=".75"/><rect x="237" y="87" width="2" height="1" fill="#2a8a22" opacity=".75"/><rect x="246" y="77" width="1" height="1" fill="#2a8a22" opacity=".75"/><rect x="240" y="82" width="1" height="13" fill="#000" opacity=".75"/><rect x="254" y="84" width="1" height="14" fill="#000" opacity=".75"/><rect x="248" y="80" width="1" height="16" fill="#000" opacity=".75"/><rect x="132" y="78" width="1" height="8" fill="#000" opacity=".75"/><rect x="184" y="83" width="1" height="13" fill="#000" opacity=".75"/><rect x="150" y="83" width="1" height="8" fill="#000" opacity=".75"/><rect x="256" y="83" width="1" height="16" fill="#000" opacity=".75"/><rect x="213" y="80" width="1" height="6" fill="#000" opacity=".75"/><rect x="186" y="80" width="1" height="14" fill="#000" opacity=".75"/><rect x="213" y="80" width="1" height="5" fill="#000" opacity=".75"/><rect x="212" y="83" width="1" height="11" fill="#000" opacity=".75"/><rect x="275" y="82" width="1" height="14" fill="#000" opacity=".75"/><rect x="201" y="81" width="1" height="12" fill="#000" opacity=".75"/><rect x="208" y="81" width="1" height="9" fill="#000" opacity=".75"/><rect x="186" y="81" width="1" height="15" fill="#000" opacity=".75"/><rect x="262" y="79" width="1" height="5" fill="#000" opacity=".75"/><rect x="222" y="84" width="1" height="9" fill="#000" opacity=".75"/><rect x="136" y="80" width="1" height="14" fill="#000" opacity=".75"/><rect x="231" y="82" width="1" height="10" fill="#000" opacity=".75"/><rect x="179" y="83" width="1" height="13" fill="#000" opacity=".75"/><rect x="224" y="84" width="1" height="10" fill="#000" opacity=".75"/><rect x="268" y="79" width="1" height="13" fill="#000" opacity=".75"/><rect x="274" y="79" width="1" height="6" fill="#000" opacity=".75"/><rect x="152" y="84" width="1" height="11" fill="#000" opacity=".75"/><rect x="202" y="84" width="1" height="4" fill="#000" opacity=".75"/><rect x="186" y="82" width="1" height="4" fill="#000" opacity=".75"/><rect x="269" y="79" width="1" height="13" fill="#000" opacity=".75"/><rect x="205" y="78" width="1" height="14" fill="#000" opacity=".75"/><rect x="238" y="78" width="1" height="13" fill="#000" opacity=".75"/><rect x="269" y="80" width="1" height="16" fill="#000" opacity=".75"/><rect x="269" y="78" width="1" height="9" fill="#000" opacity=".75"/><rect x="150" y="80" width="1" height="15" fill="#000" opacity=".75"/><rect x="156" y="80" width="1" height="5" fill="#000" opacity=".75"/><rect x="136" y="83" width="1" height="14" fill="#000" opacity=".75"/></svg>
<div class="t sys" style="left:22px;top:517px;white-space:pre"><span style="color:#00ff00">X:</span></div>
<div class="t sys" style="left:41px;top:517px;white-space:pre"><span style="color:#fff"><i>0.0</i></span></div>
<div class="t sys" style="left:22px;top:537px;white-space:pre"><span style="color:#00ff00">Y:</span></div>
<div class="t sys" style="left:41px;top:537px;white-space:pre"><span style="color:#fff"><i>5.0178215994</i></span></div>
<div class="t sys" style="left:22px;top:557px;white-space:pre"><span style="color:#00ff00">Z:</span></div>
<div class="t sys" style="left:41px;top:557px;white-space:pre"><span style="color:#fff"><i>0.0</i></span></div>
<div class="t sys" style="left:22px;top:597px;white-space:pre"><span style="color:#00ffff">sm:</span></div>
<div class="t sys" style="left:51px;top:597px;white-space:pre"><span style="color:#fff"><i>8</i></span></div>
<div class="t sys" style="left:22px;top:617px;white-space:pre"><span style="color:#00ffff">warps:</span></div>
<div class="t sys" style="left:71px;top:617px;white-space:pre"><span style="color:#fff"><i>64</i></span></div>
<div class="t sys" style="left:22px;top:637px;white-space:pre"><span style="color:#00ffff">lanes:</span></div>
<div class="t sys" style="left:71px;top:637px;white-space:pre"><span style="color:#fff"><i>32</i></span></div>
<div class="t sys" style="left:22px;top:657px;white-space:pre"><span style="color:#00ffff">async engines:</span></div>
<div class="t sys" style="left:127px;top:657px;white-space:pre"><span style="color:#fff"><i>2</i></span></div>
<div class="t sys" style="left:22px;top:697px;white-space:pre"><span style="color:#ffff00">Instructions</span></div>
<div class="t sys" style="left:220px;top:517px;white-space:pre"><span style="color:#ffff00">F(%):</span></div>
<div class="t sys" style="left:264px;top:517px;white-space:pre"><span style="color:#fff"><i>53</i></span></div>
<div class="t sys" style="left:220px;top:537px;white-space:pre"><span style="color:#ffff00">T(C):</span></div>
<div class="t sys" style="left:264px;top:537px;white-space:pre"><span style="color:#fff"><i>63</i></span></div>
<div class="t sys" style="left:220px;top:557px;white-space:pre"><span style="color:#ffff00">SM(MHz):</span></div>
<div class="t sys" style="left:290px;top:557px;white-space:pre"><span style="color:#fff"><i>1328</i></span></div>
<div class="t sys" style="left:220px;top:597px;white-space:pre"><span style="color:#ffff00">Scale</span></div>
<div class="t sys" style="left:266px;top:597px;white-space:pre"><span style="color:#fff"><i>1.0</i></span></div>
<div class="t sys r" style="left:360px;width:100px;top:702px;color:#fff"><i>14122</i></div>
<div style="left:20px;top:496px;width:447px;height:225px;overflow:hidden"><div class="t sys" style="left:106px;top:221px;color:#fff"><i>64</i></div></div>
<div class="sunk" style="left:494px;top:468px;width:1170px;height:257px;background:#f0f0f0"></div>
<div style="left:496px;top:470px;width:1150px;height:18px;background:#f0f0f0"></div>
<div class="hc" style="left:496px;top:470px;width:4px;height:18px;"></div>
<div class="hc" style="left:500px;top:470px;width:50px;height:18px;">%tid.y</div>
<div class="hc" style="left:550px;top:470px;width:50px;height:18px;">%tid.z</div>
<div class="hc" style="left:600px;top:470px;width:60px;height:18px;">%laneid</div>
<div class="hc" style="left:660px;top:470px;width:60px;height:18px;">%warpid</div>
<div class="hc" style="left:720px;top:470px;width:60px;height:18px;">%smid</div>
<div class="hc" style="left:780px;top:470px;width:80px;height:18px;">%clock start</div>
<div class="hc" style="left:860px;top:470px;width:80px;height:18px;">%clock end</div>
<div class="hc" style="left:940px;top:470px;width:80px;height:18px;">clock(cycles)</div>
<div class="hc" style="left:1020px;top:470px;width:110px;height:18px;">%globaltimer start</div>
<div class="hc" style="left:1130px;top:470px;width:110px;height:18px;">%globaltimer end</div>
<div class="hc" style="left:1240px;top:470px;width:110px;height:18px;">timer (ns)</div>
<div class="hc" style="left:1350px;top:470px;width:296px;height:18px;"></div>
<div style="left:496px;top:488px;width:1150px;height:1px;background:#6a6a6a"></div>
<div style="left:496px;top:490px;width:1150px;height:217px;overflow:hidden;background:#c0c0c0">
<div style="left:0;top:0px;width:100%;height:1px;background:#ebebeb"></div>
<div style="left:0;top:16px;width:100%;height:1px;background:#ebebeb"></div>
<div style="left:0;top:32px;width:100%;height:1px;background:#ebebeb"></div>
<div style="left:0;top:48px;width:100%;height:1px;background:#ebebeb"></div>
<div style="left:0;top:64px;width:100%;height:1px;background:#ebebeb"></div>
<div style="left:0;top:80px;width:100%;height:1px;background:#ebebeb"></div>
<div style="left:0;top:96px;width:100%;height:1px;background:#ebebeb"></div>
<div style="left:0;top:112px;width:100%;height:1px;background:#ebebeb"></div>
<div style="left:0;top:128px;width:100%;height:1px;background:#ebebeb"></div>
<div style="left:0;top:144px;width:100%;height:1px;background:#ebebeb"></div>
<div style="left:0;top:160px;width:100%;height:1px;background:#ebebeb"></div>
<div style="left:0;top:176px;width:100%;height:1px;background:#ebebeb"></div>
<div style="left:0;top:192px;width:100%;height:1px;background:#ebebeb"></div>
<div style="left:0;top:208px;width:100%;height:1px;background:#ebebeb"></div>
<div style="left:0;top:224px;width:100%;height:1px;background:#ebebeb"></div>
<div style="left:4px;top:0;width:1px;height:100%;background:#ebebeb"></div>
<div style="left:54px;top:0;width:1px;height:100%;background:#ebebeb"></div>
<div style="left:104px;top:0;width:1px;height:100%;background:#ebebeb"></div>
<div style="left:164px;top:0;width:1px;height:100%;background:#ebebeb"></div>
<div style="left:224px;top:0;width:1px;height:100%;background:#ebebeb"></div>
<div style="left:284px;top:0;width:1px;height:100%;background:#ebebeb"></div>
<div style="left:364px;top:0;width:1px;height:100%;background:#ebebeb"></div>
<div style="left:444px;top:0;width:1px;height:100%;background:#ebebeb"></div>
<div style="left:524px;top:0;width:1px;height:100%;background:#ebebeb"></div>
<div style="left:634px;top:0;width:1px;height:100%;background:#ebebeb"></div>
<div style="left:744px;top:0;width:1px;height:100%;background:#ebebeb"></div>
<div style="left:854px;top:0;width:2px;height:100%;background:#fff"></div>
<div style="left:1150px;top:0;width:1px;height:100%;background:#ebebeb"></div>
<div class="t n" style="left:10px;top:1px">0</div>
<div class="t n" style="left:60px;top:1px">0</div>
<div class="t n" style="left:110px;top:1px">24</div>
<div class="t n" style="left:170px;top:1px">1</div>
<div class="t n" style="left:230px;top:1px">0</div>
<div class="t n" style="left:290px;top:1px">1863</div>
<div class="t n" style="left:370px;top:1px">1866</div>
<div class="t n" style="left:450px;top:1px">3</div>
<div class="t n" style="left:530px;top:1px">2048</div>
<div class="t n" style="left:640px;top:1px">2048</div>
<div class="t" style="left:750px;top:1px;letter-spacing:-0.26px">22.22222222222...</div>
<div class="t n" style="left:10px;top:17px">0</div>
<div class="t n" style="left:60px;top:17px">0</div>
<div class="t n" style="left:110px;top:17px">25</div>
<div class="t n" style="left:170px;top:17px">1</div>
<div class="t n" style="left:230px;top:17px">0</div>
<div class="t n" style="left:290px;top:17px">1863</div>
<div class="t n" style="left:370px;top:17px">1866</div>
<div class="t n" style="left:450px;top:17px">3</div>
<div class="t n" style="left:530px;top:17px">2048</div>
<div class="t n" style="left:640px;top:17px">2048</div>
<div class="t" style="left:750px;top:17px;letter-spacing:-0.26px">22.22222222222...</div>
<div class="t n" style="left:10px;top:33px">0</div>
<div class="t n" style="left:60px;top:33px">0</div>
<div class="t n" style="left:110px;top:33px">26</div>
<div class="t n" style="left:170px;top:33px">1</div>
<div class="t n" style="left:230px;top:33px">0</div>
<div class="t n" style="left:290px;top:33px">1863</div>
<div class="t n" style="left:370px;top:33px">1866</div>
<div class="t n" style="left:450px;top:33px">3</div>
<div class="t n" style="left:530px;top:33px">2048</div>
<div class="t n" style="left:640px;top:33px">2048</div>
<div class="t" style="left:750px;top:33px;letter-spacing:-0.26px">22.22222222222...</div>
<div class="t n" style="left:10px;top:49px">0</div>
<div class="t n" style="left:60px;top:49px">0</div>
<div class="t n" style="left:110px;top:49px">27</div>
<div class="t n" style="left:170px;top:49px">1</div>
<div class="t n" style="left:230px;top:49px">0</div>
<div class="t n" style="left:290px;top:49px">1863</div>
<div class="t n" style="left:370px;top:49px">1866</div>
<div class="t n" style="left:450px;top:49px">3</div>
<div class="t n" style="left:530px;top:49px">2048</div>
<div class="t n" style="left:640px;top:49px">2048</div>
<div class="t" style="left:750px;top:49px;letter-spacing:-0.26px">22.22222222222...</div>
<div class="t n" style="left:10px;top:65px">0</div>
<div class="t n" style="left:60px;top:65px">0</div>
<div class="t n" style="left:110px;top:65px">28</div>
<div class="t n" style="left:170px;top:65px">1</div>
<div class="t n" style="left:230px;top:65px">0</div>
<div class="t n" style="left:290px;top:65px">1863</div>
<div class="t n" style="left:370px;top:65px">1866</div>
<div class="t n" style="left:450px;top:65px">3</div>
<div class="t n" style="left:530px;top:65px">2048</div>
<div class="t n" style="left:640px;top:65px">2048</div>
<div class="t" style="left:750px;top:65px;letter-spacing:-0.26px">22.22222222222...</div>
<div class="t n" style="left:10px;top:81px">0</div>
<div class="t n" style="left:60px;top:81px">0</div>
<div class="t n" style="left:110px;top:81px">29</div>
<div class="t n" style="left:170px;top:81px">1</div>
<div class="t n" style="left:230px;top:81px">0</div>
<div class="t n" style="left:290px;top:81px">1863</div>
<div class="t n" style="left:370px;top:81px">1866</div>
<div class="t n" style="left:450px;top:81px">3</div>
<div class="t n" style="left:530px;top:81px">2048</div>
<div class="t n" style="left:640px;top:81px">2048</div>
<div class="t" style="left:750px;top:81px;letter-spacing:-0.26px">22.22222222222...</div>
<div class="t n" style="left:10px;top:97px">0</div>
<div class="t n" style="left:60px;top:97px">0</div>
<div class="t n" style="left:110px;top:97px">30</div>
<div class="t n" style="left:170px;top:97px">1</div>
<div class="t n" style="left:230px;top:97px">0</div>
<div class="t n" style="left:290px;top:97px">1863</div>
<div class="t n" style="left:370px;top:97px">1866</div>
<div class="t n" style="left:450px;top:97px">3</div>
<div class="t n" style="left:530px;top:97px">2048</div>
<div class="t n" style="left:640px;top:97px">2048</div>
<div class="t" style="left:750px;top:97px;letter-spacing:-0.26px">22.22222222222...</div>
<div class="t n" style="left:10px;top:113px">0</div>
<div class="t n" style="left:60px;top:113px">0</div>
<div class="t n" style="left:110px;top:113px">31</div>
<div class="t n" style="left:170px;top:113px">1</div>
<div class="t n" style="left:230px;top:113px">0</div>
<div class="t n" style="left:290px;top:113px">1863</div>
<div class="t n" style="left:370px;top:113px">1866</div>
<div class="t n" style="left:450px;top:113px">3</div>
<div class="t n" style="left:530px;top:113px">2048</div>
<div class="t n" style="left:640px;top:113px">2048</div>
<div class="t" style="left:750px;top:113px;letter-spacing:-0.26px">22.22222222222...</div>
<div class="t n" style="left:10px;top:129px">0</div>
<div class="t n" style="left:60px;top:129px">0</div>
<div class="t n" style="left:110px;top:129px">0</div>
<div class="t n" style="left:170px;top:129px">2</div>
<div class="t n" style="left:230px;top:129px">0</div>
<div class="t n" style="left:290px;top:129px">1951</div>
<div class="t n" style="left:370px;top:129px">1960</div>
<div class="t n" style="left:450px;top:129px">9</div>
<div class="t n" style="left:530px;top:129px">2048</div>
<div class="t n" style="left:640px;top:129px">2048</div>
<div class="t" style="left:750px;top:129px;letter-spacing:-0.26px">66.66666666666...</div>
<div class="t n" style="left:10px;top:145px">0</div>
<div class="t n" style="left:60px;top:145px">0</div>
<div class="t n" style="left:110px;top:145px">1</div>
<div class="t n" style="left:170px;top:145px">2</div>
<div class="t n" style="left:230px;top:145px">0</div>
<div class="t n" style="left:290px;top:145px">1951</div>
<div class="t n" style="left:370px;top:145px">1960</div>
<div class="t n" style="left:450px;top:145px">9</div>
<div class="t n" style="left:530px;top:145px">2048</div>
<div class="t n" style="left:640px;top:145px">2048</div>
<div class="t" style="left:750px;top:145px;letter-spacing:-0.26px">66.66666666666...</div>
<div class="t n" style="left:10px;top:161px">0</div>
<div class="t n" style="left:60px;top:161px">0</div>
<div class="t n" style="left:110px;top:161px">2</div>
<div class="t n" style="left:170px;top:161px">2</div>
<div class="t n" style="left:230px;top:161px">0</div>
<div class="t n" style="left:290px;top:161px">1951</div>
<div class="t n" style="left:370px;top:161px">1960</div>
<div class="t n" style="left:450px;top:161px">9</div>
<div class="t n" style="left:530px;top:161px">2048</div>
<div class="t n" style="left:640px;top:161px">2048</div>
<div class="t" style="left:750px;top:161px;letter-spacing:-0.26px">66.66666666666...</div>
<div class="t n" style="left:10px;top:177px">0</div>
<div class="t n" style="left:60px;top:177px">0</div>
<div class="t n" style="left:110px;top:177px">3</div>
<div class="t n" style="left:170px;top:177px">2</div>
<div class="t n" style="left:230px;top:177px">0</div>
<div class="t n" style="left:290px;top:177px">1951</div>
<div class="t n" style="left:370px;top:177px">1960</div>
<div class="t n" style="left:450px;top:177px">9</div>
<div class="t n" style="left:530px;top:177px">2048</div>
<div class="t n" style="left:640px;top:177px">2048</div>
<div class="t" style="left:750px;top:177px;letter-spacing:-0.26px">66.66666666666...</div>
<div class="t n" style="left:10px;top:193px">0</div>
<div class="t n" style="left:60px;top:193px">0</div>
<div class="t n" style="left:110px;top:193px">4</div>
<div class="t n" style="left:170px;top:193px">2</div>
<div class="t n" style="left:230px;top:193px">0</div>
<div class="t n" style="left:290px;top:193px">1951</div>
<div class="t n" style="left:370px;top:193px">1960</div>
<div class="t n" style="left:450px;top:193px">9</div>
<div class="t n" style="left:530px;top:193px">2048</div>
<div class="t n" style="left:640px;top:193px">2048</div>
<div class="t" style="left:750px;top:193px;letter-spacing:-0.26px">66.66666666666...</div>
<div class="t n" style="left:10px;top:209px">0</div>
<div class="t n" style="left:60px;top:209px">0</div>
<div class="t n" style="left:110px;top:209px">5</div>
<div class="t n" style="left:170px;top:209px">2</div>
<div class="t n" style="left:230px;top:209px">0</div>
<div class="t n" style="left:290px;top:209px">1951</div>
<div class="t n" style="left:370px;top:209px">1960</div>
<div class="t n" style="left:450px;top:209px">9</div>
<div class="t n" style="left:530px;top:209px">2048</div>
<div class="t n" style="left:640px;top:209px">2048</div>
<div class="t" style="left:750px;top:209px;letter-spacing:-0.26px">66.66666666666...</div>
</div>
<div style="left:1479px;top:492px;width:13px;height:12px;background:#00ff00"></div>
<div style="left:1479px;top:508px;width:13px;height:12px;background:#00ff00"></div>
<div style="left:1479px;top:524px;width:13px;height:12px;background:#00ff00"></div>
<div style="left:1479px;top:540px;width:13px;height:12px;background:#00ff00"></div>
<div style="left:1479px;top:556px;width:13px;height:12px;background:#00ff00"></div>
<div style="left:1479px;top:572px;width:13px;height:12px;background:#00ff00"></div>
<div style="left:1479px;top:588px;width:13px;height:12px;background:#00ff00"></div>
<div style="left:1479px;top:604px;width:13px;height:12px;background:#00ff00"></div>
<div style="left:1579px;top:620px;width:20px;height:12px;background:#00ff00"></div>
<div style="left:1579px;top:636px;width:20px;height:12px;background:#00ff00"></div>
<div style="left:1579px;top:652px;width:20px;height:12px;background:#00ff00"></div>
<div style="left:1579px;top:668px;width:20px;height:12px;background:#00ff00"></div>
<div style="left:1579px;top:684px;width:20px;height:12px;background:#00ff00"></div>
<div style="left:1579px;top:700px;width:20px;height:7px;background:#00ff00"></div>
<div style="left:500px;top:682px;width:51px;height:17px;border:1px solid #f4f4f4"></div>
<div style="left:495px;top:682px;width:5px;height:16px;border:1px solid #f4f4f4;border-right:0"></div>
<div class="sb" style="left:1646px;top:470px;width:17px;height:237px;"></div>
<svg style="position:absolute;left:1646px;top:470px;" width="17" height="237" viewBox="0 0 17 237"><polygon points="5.0,11 12.0,11 8.5,7" fill="#404040"/><polygon points="5.0,226 12.0,226 8.5,230" fill="#404040"/></svg>
<div class="th" style="left:1647px;top:491px;width:15px;height:15px;"></div>
<div class="sb" style="left:496px;top:707px;width:1150px;height:16px;"></div>
<svg style="position:absolute;left:496px;top:707px;" width="1150" height="16" viewBox="0 0 1150 16"><polygon points="11,4.5 11,11.5 7,8.0" fill="#404040"/><polygon points="1139,4.5 1139,11.5 1143,8.0" fill="#404040"/></svg>
<div class="thh" style="left:584px;top:708px;width:783px;height:14px;"></div>
<div style="left:972px;top:712px;width:1px;height:6px;background:#555;border-bottom:1px solid #999"></div>
<div style="left:975px;top:712px;width:1px;height:6px;background:#555;border-bottom:1px solid #999"></div>
<div style="left:978px;top:712px;width:1px;height:6px;background:#555;border-bottom:1px solid #999"></div>
<svg style="position:absolute;left:1649px;top:709px;" width="13" height="13" viewBox="0 0 13 13"><g fill="#c6c6c6"><rect x="9" y="3" width="2" height="2"/><rect x="6" y="6" width="2" height="2"/><rect x="9" y="6" width="2" height="2"/><rect x="3" y="9" width="2" height="2"/><rect x="6" y="9" width="2" height="2"/><rect x="9" y="9" width="2" height="2"/></g></svg>
<div class="sunk" style="left:11px;top:764px;width:614px;height:237px;background:#fff"></div>
<div class="btn" style="left:13px;top:766px;width:48px;height:19px;line-height:18px">Device</div>
<div class="btn" style="left:61px;top:766px;width:40px;height:19px;line-height:18px">Unit</div>
<div class="btn" style="left:101px;top:766px;width:60px;height:19px;line-height:18px">System</div>
<div class="btn" style="left:161px;top:766px;width:132px;height:19px;line-height:18px">Accounting Statistics</div>
<div class="btn" style="left:293px;top:766px;width:50px;height:19px;line-height:18px">BIOS</div>
<div style="left:343px;top:766px;width:280px;height:19px;background:#f0f0f0;border-top:1px solid #fff"></div>
<div style="left:13px;top:785px;width:610px;height:1px;background:#6a6a6a"></div>
<div style="left:13px;top:786px;width:581px;height:18px;background:#f0f0f0"></div>
<div class="hc" style="left:13px;top:786px;width:10px;height:18px;"></div>
<div class="hc r" style="left:23px;top:786px;width:299px;height:18px;">description</div>
<div class="hc" style="left:322px;top:786px;width:260px;height:18px;">properties</div>
<div style="left:13px;top:804px;width:581px;height:1px;background:#6a6a6a"></div>
<div style="left:13px;top:805px;width:581px;height:185px;overflow:hidden;background:#a0ffa0">
<div style="left:0;top:1px;width:100%;height:1px;background:#d4ffd4"></div>
<div style="left:0;top:17px;width:100%;height:1px;background:#d4ffd4"></div>
<div style="left:0;top:33px;width:100%;height:1px;background:#d4ffd4"></div>
<div style="left:0;top:49px;width:100%;height:1px;background:#d4ffd4"></div>
<div style="left:0;top:65px;width:100%;height:1px;background:#d4ffd4"></div>
<div style="left:0;top:81px;width:100%;height:1px;background:#d4ffd4"></div>
<div style="left:0;top:97px;width:100%;height:1px;background:#d4ffd4"></div>
<div style="left:0;top:113px;width:100%;height:1px;background:#d4ffd4"></div>
<div style="left:0;top:129px;width:100%;height:1px;background:#d4ffd4"></div>
<div style="left:0;top:145px;width:100%;height:1px;background:#d4ffd4"></div>
<div style="left:0;top:161px;width:100%;height:1px;background:#d4ffd4"></div>
<div style="left:0;top:177px;width:100%;height:1px;background:#d4ffd4"></div>
<div style="left:0;top:193px;width:100%;height:1px;background:#d4ffd4"></div>
<div style="left:10px;top:0;width:1px;height:100%;background:#d4ffd4"></div>
<div style="left:309px;top:0;width:1px;height:100%;background:#d4ffd4"></div>
<div style="left:569px;top:0;width:1px;height:100%;background:#d4ffd4"></div>
<div class="t r" style="left:0;width:303px;top:2px;letter-spacing:-0.13px">Device Count</div><div class="t n" style="left:315px;top:2px">1</div>
<div class="t r" style="left:0;width:303px;top:18px;letter-spacing:-0.24px">Device Handle By Index</div><div class="t n" style="left:315px;top:18px">8791429704440</div>
<div class="t r" style="left:0;width:303px;top:34px;letter-spacing:-0.21px">Device Name</div><div class="t" style="left:315px;top:34px;letter-spacing:-0.64px">GeForce GTX 960</div>
<div class="t r" style="left:0;width:303px;top:50px;letter-spacing:-0.03px">PCIe info: device function PCI identifier</div><div class="t n" style="left:315px;top:50px">0000:02:00.0</div>
<div class="t r" style="left:0;width:303px;top:66px;letter-spacing:-0.1px">PCIe info: domain on which the devices bus resides</div><div class="t n" style="left:315px;top:66px">0</div>
<div class="t r" style="left:0;width:303px;top:82px;letter-spacing:-0.12px">PCIe info: bus on which the device resides</div><div class="t n" style="left:315px;top:82px">2</div>
<div class="t r" style="left:0;width:303px;top:98px;letter-spacing:-0.17px">PCIe info: devices ID on the bus</div><div class="t n" style="left:315px;top:98px">0</div>
<div class="t r" style="left:0;width:303px;top:114px;letter-spacing:-0.22px">PCIe info: device ID</div><div class="t n" style="left:315px;top:114px">4318</div>
<div class="t r" style="left:0;width:303px;top:130px;letter-spacing:-0.17px">PCIe info: vendor ID</div><div class="t n" style="left:315px;top:130px">5121</div>
<div class="t r" style="left:0;width:303px;top:146px;letter-spacing:-0.26px">PCIe info: Sub System device ID</div><div class="t n" style="left:315px;top:146px">0</div>
<div class="t r" style="left:0;width:303px;top:162px;letter-spacing:-0.02px">Device Compute Mode</div><div class="t" style="left:315px;top:162px">Default compute mode - multiple contexts p...</div>
<div class="t r" style="left:0;width:303px;top:178px;letter-spacing:-0.09px">Graphics clock domain (MHz)</div><div class="t n" style="left:315px;top:178px">1126</div>
</div>
<div class="sb" style="left:594px;top:786px;width:15px;height:204px;"></div>
<svg style="position:absolute;left:594px;top:786px;" width="15" height="204" viewBox="0 0 15 204"><polygon points="4.0,11 11.0,11 7.5,7" fill="#404040"/><polygon points="4.0,193 11.0,193 7.5,197" fill="#404040"/></svg>
<div class="th" style="left:595px;top:804px;width:13px;height:32px;"></div>
<div style="left:599px;top:817px;width:5px;height:1px;background:#555;border-right:1px solid #999"></div>
<div style="left:599px;top:820px;width:5px;height:1px;background:#555;border-right:1px solid #999"></div>
<div style="left:599px;top:823px;width:5px;height:1px;background:#555;border-right:1px solid #999"></div>
<div class="sunk" style="left:640px;top:769px;width:1024px;height:226px;background:#f0f0f0"></div>
<div style="left:642px;top:771px;width:1003px;height:18px;background:#f0f0f0"></div>
<div class="hc" style="left:642px;top:771px;width:12px;height:18px;"></div>
<div class="hc" style="left:654px;top:771px;width:60px;height:18px;">%ctaid.z</div>
<div class="hc" style="left:714px;top:771px;width:80px;height:18px;">%clock start</div>
<div class="hc" style="left:794px;top:771px;width:80px;height:18px;">%clock end</div>
<div class="hc" style="left:874px;top:771px;width:80px;height:18px;">clock(cycles)</div>
<div class="hc" style="left:954px;top:771px;width:110px;height:18px;">%globaltimer start</div>
<div class="hc" style="left:1064px;top:771px;width:110px;height:18px;">%globaltimer end</div>
<div class="hc" style="left:1174px;top:771px;width:110px;height:18px;">globaltimer (ns)</div>
<div class="hc" style="left:1284px;top:771px;width:361px;height:18px;"></div>
<div style="left:642px;top:789px;width:1003px;height:1px;background:#6a6a6a"></div>
<div style="left:642px;top:791px;width:1003px;height:186px;overflow:hidden;background:#c0c0c0">
<div style="left:0;top:0px;width:100%;height:1px;background:#ebebeb"></div>
<div style="left:0;top:16px;width:100%;height:1px;background:#ebebeb"></div>
<div style="left:0;top:32px;width:100%;height:1px;background:#ebebeb"></div>
<div style="left:0;top:48px;width:100%;height:1px;background:#ebebeb"></div>
<div style="left:0;top:64px;width:100%;height:1px;background:#ebebeb"></div>
<div style="left:0;top:80px;width:100%;height:1px;background:#ebebeb"></div>
<div style="left:0;top:96px;width:100%;height:1px;background:#ebebeb"></div>
<div style="left:0;top:112px;width:100%;height:1px;background:#ebebeb"></div>
<div style="left:0;top:128px;width:100%;height:1px;background:#ebebeb"></div>
<div style="left:0;top:144px;width:100%;height:1px;background:#ebebeb"></div>
<div style="left:0;top:160px;width:100%;height:1px;background:#ebebeb"></div>
<div style="left:0;top:176px;width:100%;height:1px;background:#ebebeb"></div>
<div style="left:0;top:192px;width:100%;height:1px;background:#ebebeb"></div>
<div style="left:12px;top:0;width:1px;height:100%;background:#ebebeb"></div>
<div style="left:72px;top:0;width:1px;height:100%;background:#ebebeb"></div>
<div style="left:152px;top:0;width:1px;height:100%;background:#ebebeb"></div>
<div style="left:232px;top:0;width:1px;height:100%;background:#ebebeb"></div>
<div style="left:312px;top:0;width:1px;height:100%;background:#ebebeb"></div>
<div style="left:422px;top:0;width:1px;height:100%;background:#ebebeb"></div>
<div style="left:532px;top:0;width:1px;height:100%;background:#ebebeb"></div>
<div style="left:642px;top:0;width:2px;height:100%;background:#fff"></div>
<div style="left:1003px;top:0;width:1px;height:100%;background:#ebebeb"></div>
<div class="t n" style="left:18px;top:1px">0</div>
<div class="t n" style="left:78px;top:1px">1755</div>
<div class="t n" style="left:158px;top:1px">20219</div>
<div class="t n" style="left:238px;top:1px">18464</div>
<div class="t n" style="left:318px;top:1px">1024</div>
<div class="t n" style="left:428px;top:1px">17408</div>
<div class="t n" style="left:538px;top:1px">16384</div>
<div class="t n" style="left:18px;top:17px">0</div>
<div class="t n" style="left:78px;top:17px">486</div>
<div class="t n" style="left:158px;top:17px">3419</div>
<div class="t n" style="left:238px;top:17px">2933</div>
<div class="t n" style="left:318px;top:17px">0</div>
<div class="t n" style="left:428px;top:17px">3072</div>
<div class="t n" style="left:538px;top:17px">3072</div>
<div class="t n" style="left:18px;top:33px">0</div>
<div class="t n" style="left:78px;top:33px">1251</div>
<div class="t n" style="left:158px;top:33px">30872</div>
<div class="t n" style="left:238px;top:33px">29621</div>
<div class="t n" style="left:318px;top:33px">1024</div>
<div class="t n" style="left:428px;top:33px">26624</div>
<div class="t n" style="left:538px;top:33px">25600</div>
<div class="t n" style="left:18px;top:49px">0</div>
<div class="t n" style="left:78px;top:49px">544</div>
<div class="t n" style="left:158px;top:49px">1082</div>
<div class="t n" style="left:238px;top:49px">538</div>
<div class="t n" style="left:318px;top:49px">0</div>
<div class="t n" style="left:428px;top:49px">1024</div>
<div class="t n" style="left:538px;top:49px">1024</div>
<div class="t n" style="left:18px;top:65px">0</div>
<div class="t n" style="left:78px;top:65px">1075</div>
<div class="t n" style="left:158px;top:65px">24521</div>
<div class="t n" style="left:238px;top:65px">23446</div>
<div class="t n" style="left:318px;top:65px">1024</div>
<div class="t n" style="left:428px;top:65px">21504</div>
<div class="t n" style="left:538px;top:65px">20480</div>
<div class="t n" style="left:18px;top:81px">0</div>
<div class="t n" style="left:78px;top:81px">483</div>
<div class="t n" style="left:158px;top:81px">6341</div>
<div class="t n" style="left:238px;top:81px">5858</div>
<div class="t n" style="left:318px;top:81px">0</div>
<div class="t n" style="left:428px;top:81px">6144</div>
<div class="t n" style="left:538px;top:81px">6144</div>
<div class="t n" style="left:18px;top:97px">0</div>
<div class="t n" style="left:78px;top:97px">1635</div>
<div class="t n" style="left:158px;top:97px">26432</div>
<div class="t n" style="left:238px;top:97px">24797</div>
<div class="t n" style="left:318px;top:97px">1024</div>
<div class="t n" style="left:428px;top:97px">22528</div>
<div class="t n" style="left:538px;top:97px">21504</div>
<div class="t n" style="left:18px;top:113px">0</div>
<div class="t n" style="left:78px;top:113px">550</div>
<div class="t n" style="left:158px;top:113px">7276</div>
<div class="t n" style="left:238px;top:113px">6726</div>
<div class="t n" style="left:318px;top:113px">0</div>
<div class="t n" style="left:428px;top:113px">6144</div>
<div class="t n" style="left:538px;top:113px">6144</div>
<div class="t n" style="left:18px;top:129px">0</div>
<div class="t n" style="left:78px;top:129px">1961</div>
<div class="t n" style="left:158px;top:129px">23911</div>
<div class="t n" style="left:238px;top:129px">21950</div>
<div class="t n" style="left:318px;top:129px">2048</div>
<div class="t n" style="left:428px;top:129px">21504</div>
<div class="t n" style="left:538px;top:129px">19456</div>
<div class="t n" style="left:18px;top:145px">0</div>
<div class="t n" style="left:78px;top:145px">435</div>
<div class="t n" style="left:158px;top:145px">1059</div>
<div class="t n" style="left:238px;top:145px">624</div>
<div class="t n" style="left:318px;top:145px">0</div>
<div class="t n" style="left:428px;top:145px">1024</div>
<div class="t n" style="left:538px;top:145px">1024</div>
<div class="t n" style="left:18px;top:161px">0</div>
<div class="t n" style="left:78px;top:161px">1562</div>
<div class="t n" style="left:158px;top:161px">19802</div>
<div class="t n" style="left:238px;top:161px">18240</div>
<div class="t n" style="left:318px;top:161px">2048</div>
<div class="t n" style="left:428px;top:161px">17408</div>
<div class="t n" style="left:538px;top:161px">15360</div>
<div class="t n" style="left:18px;top:177px">0</div>
<div class="t n" style="left:78px;top:177px">385</div>
<div class="t n" style="left:158px;top:177px">7608</div>
<div class="t n" style="left:238px;top:177px">7223</div>
<div class="t n" style="left:318px;top:177px">0</div>
<div class="t n" style="left:428px;top:177px">6144</div>
<div class="t n" style="left:538px;top:177px">6144</div>
</div>
<div style="left:642px;top:772px;width:10px;height:16px;overflow:hidden"><div class="t" style="left:-2px;top:1px">y</div></div>
<div style="left:1302px;top:793px;width:168px;height:12px;background:#0000ff"></div>
<div style="left:1291px;top:809px;width:26px;height:12px;background:#0000ff"></div>
<div style="left:1298px;top:825px;width:270px;height:12px;background:#0000ff"></div>
<div style="left:1291px;top:841px;width:15px;height:12px;background:#0000ff"></div>
<div style="left:1296px;top:857px;width:214px;height:12px;background:#0000ff"></div>
<div style="left:1291px;top:873px;width:53px;height:12px;background:#0000ff"></div>
<div style="left:1301px;top:889px;width:226px;height:12px;background:#0000ff"></div>
<div style="left:1291px;top:905px;width:62px;height:12px;background:#0000ff"></div>
<div style="left:1304px;top:921px;width:200px;height:12px;background:#0000ff"></div>
<div style="left:1290px;top:937px;width:16px;height:12px;background:#0000ff"></div>
<div style="left:1301px;top:953px;width:166px;height:12px;background:#0000ff"></div>
<div style="left:1290px;top:969px;width:66px;height:8px;background:#0000ff"></div>
<div class="sb" style="left:1645px;top:771px;width:17px;height:206px;"></div>
<svg style="position:absolute;left:1645px;top:771px;" width="17" height="206" viewBox="0 0 17 206"><polygon points="5.0,11 12.0,11 8.5,7" fill="#404040"/><polygon points="5.0,195 12.0,195 8.5,199" fill="#404040"/></svg>
<div class="th" style="left:1646px;top:792px;width:15px;height:15px;"></div>
<div class="sb" style="left:642px;top:977px;width:1003px;height:16px;"></div>
<svg style="position:absolute;left:642px;top:977px;" width="1003" height="16" viewBox="0 0 1003 16"><polygon points="11,4.5 11,11.5 7,8.0" fill="#404040"/><polygon points="992,4.5 992,11.5 996,8.0" fill="#404040"/></svg>
<div class="thh" style="left:784px;top:978px;width:752px;height:14px;"></div>
<div style="left:1157px;top:982px;width:1px;height:6px;background:#555;border-bottom:1px solid #999"></div>
<div style="left:1160px;top:982px;width:1px;height:6px;background:#555;border-bottom:1px solid #999"></div>
<div style="left:1163px;top:982px;width:1px;height:6px;background:#555;border-bottom:1px solid #999"></div>
<svg style="position:absolute;left:1648px;top:979px;" width="13" height="13" viewBox="0 0 13 13"><g fill="#c6c6c6"><rect x="9" y="3" width="2" height="2"/><rect x="6" y="6" width="2" height="2"/><rect x="9" y="6" width="2" height="2"/><rect x="3" y="9" width="2" height="2"/><rect x="6" y="9" width="2" height="2"/><rect x="9" y="9" width="2" height="2"/></g></svg>
</body></html>
